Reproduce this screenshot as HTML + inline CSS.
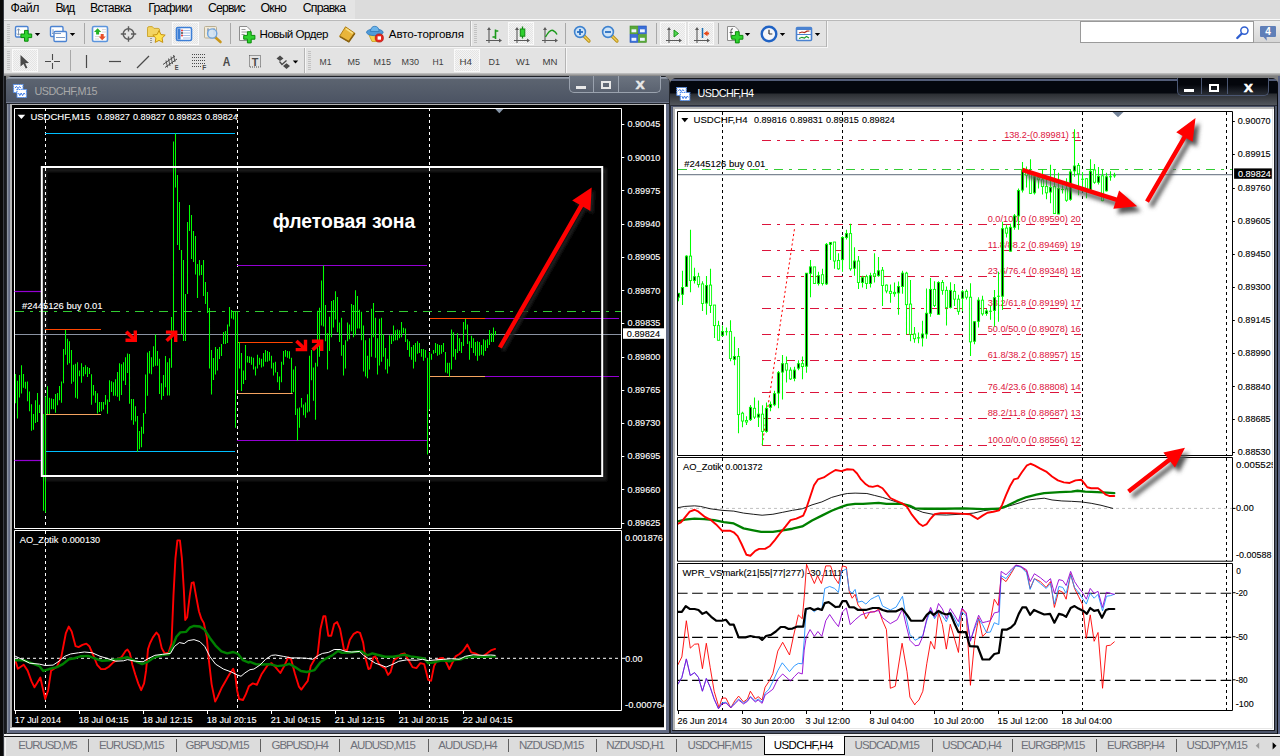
<!DOCTYPE html>
<html lang="ru"><head><meta charset="utf-8"><title>MetaTrader 4 - USDCHF,H4</title>
<style>
*{box-sizing:border-box}
html,body{margin:0;padding:0}
body{width:1280px;height:756px;overflow:hidden;position:relative;background:#808080;
font-family:"Liberation Sans",sans-serif;}
.a{position:absolute}
.t{position:absolute;white-space:pre;}
svg{position:absolute;left:0;top:0;overflow:visible}
svg text{font-family:"Liberation Sans",sans-serif;white-space:pre}
.press{position:absolute;background:#f4f4f4;border:1px solid #fafafa;
background-image:linear-gradient(45deg,#e4e4e4 25%,transparent 25%,transparent 75%,#e4e4e4 75%),
linear-gradient(45deg,#e4e4e4 25%,transparent 25%,transparent 75%,#e4e4e4 75%);
background-size:2px 2px;background-position:0 0,1px 1px;}
.sep{position:absolute;width:1px;background:#a8a8a8}
.grip{position:absolute;width:3px;background:repeating-linear-gradient(180deg,#c2c2c2 0 1px,transparent 1px 2px)}
</style></head>
<body>
<div class="a" style="left:0;top:0;width:4.5px;height:756px;background:#0a0a0a"></div>
<div class="a" style="left:3.3px;top:0;width:1px;height:756px;background:#3a3d44"></div>
<div class="a" style="left:4.4px;top:75px;width:1.400px;height:659px;background:#16181c"></div>
<div class="a" style="left:4.4px;top:0;width:1276px;height:18.600px;background:#dcdcdc"></div>
<div class="a" style="left:4.4px;top:0;width:351px;height:18.600px;background:#e4e4e4"></div>
<div class="a" style="left:4.4px;top:18.500px;width:1276px;height:1.300px;background:#fbfbfb"></div>
<div class="a" style="left:4.4px;top:19.800px;width:1276px;height:53px;background:#e3e3e3"></div>
<div class="a" style="left:4.4px;top:20.300px;width:1276px;height:1px;background:#b9b9b9"></div>
<div class="a" style="left:4.4px;top:72.600px;width:1276px;height:3px;background:linear-gradient(#c8c8c8,#808080)"></div>
<div class="a" style="left:4.4px;top:46px;width:823px;height:1px;background:#c4c4c4"></div>
<div class="a" style="left:4.4px;top:47px;width:823px;height:1px;background:#f6f6f6"></div>
<div class="a" style="left:826px;top:21px;width:1px;height:26px;background:#b4b4b4"></div>
<div class="a" style="left:827px;top:21px;width:1px;height:27px;background:#f6f6f6"></div>
<div class="a" style="left:470px;top:21px;width:1px;height:25px;background:#b4b4b4"></div>
<div class="a" style="left:471px;top:21px;width:1px;height:25px;background:#f6f6f6"></div>
<div class="a" style="left:304px;top:48px;width:1px;height:25px;background:#b4b4b4"></div>
<div class="a" style="left:305px;top:48px;width:1px;height:25px;background:#f6f6f6"></div>
<div class="a" style="left:565px;top:48px;width:1px;height:25px;background:#b4b4b4"></div>
<div class="a" style="left:566px;top:48px;width:1px;height:25px;background:#f6f6f6"></div>
<div class="grip" style="left:6.5px;top:24px;height:20px"></div>
<div class="grip" style="left:474px;top:24px;height:20px"></div>
<div class="grip" style="left:6.5px;top:51px;height:20px"></div>
<div class="grip" style="left:308px;top:51px;height:20px"></div>
<div class="press" style="left:172px;top:22px;width:26.5px;height:22.5px"></div>
<div class="press" style="left:508px;top:22px;width:25.5px;height:22.5px"></div>
<div class="press" style="left:660px;top:22px;width:25.5px;height:22.5px"></div>
<div class="press" style="left:688px;top:22px;width:25.5px;height:22.5px"></div>
<div class="press" style="left:12px;top:49px;width:25.5px;height:22.5px"></div>
<div class="press" style="left:454px;top:49px;width:25.5px;height:22.5px"></div>
<div class="sep" style="left:83.5px;top:23px;height:21px"></div>
<div class="sep" style="left:229.5px;top:23px;height:21px"></div>
<div class="sep" style="left:565px;top:23px;height:21px"></div>
<div class="sep" style="left:655.5px;top:23px;height:21px"></div>
<div class="sep" style="left:717.5px;top:23px;height:21px"></div>
<div class="sep" style="left:69.500px;top:50px;height:21px"></div>
<div class="a" style="left:1080px;top:21.300px;width:173.500px;height:22px;background:#fff;border:1px solid #9a9a9a"></div>
<div class="a" style="left:1254px;top:21.300px;width:26px;height:22px;background:linear-gradient(#ededed,#d6d6d6);border-bottom:1px solid #aaa"></div>
<span class="t" style="left:10.5px;top:0.2px;font-size:12.3px;line-height:17px;letter-spacing:-0.43px;color:#000;">Файл</span>
<span class="t" style="left:55.5px;top:0.2px;font-size:12.3px;line-height:17px;letter-spacing:-1.25px;color:#000;">Вид</span>
<span class="t" style="left:90px;top:0.2px;font-size:12.3px;line-height:17px;letter-spacing:-0.67px;color:#000;">Вставка</span>
<span class="t" style="left:148.3px;top:0.2px;font-size:12.3px;line-height:17px;letter-spacing:-0.8px;color:#000;">Графики</span>
<span class="t" style="left:208px;top:0.2px;font-size:12.3px;line-height:17px;letter-spacing:-0.89px;color:#000;">Сервис</span>
<span class="t" style="left:260.6px;top:0.2px;font-size:12.3px;line-height:17px;letter-spacing:-0.8px;color:#000;">Окно</span>
<span class="t" style="left:302.8px;top:0.2px;font-size:12.3px;line-height:17px;letter-spacing:-0.84px;color:#000;">Справка</span>
<span class="t" style="left:259.5px;top:26px;font-size:11.6px;line-height:16px;letter-spacing:-0.49px;color:#000;">Новый Ордер</span>
<span class="t" style="left:388.8px;top:26px;font-size:11.6px;line-height:16px;letter-spacing:-0.12px;color:#000;">Авто-торговля</span>
<svg width="1280" height="76" viewBox="0 0 1280 76">
<rect x="15.5" y="26.5" width="12.5" height="10.5" rx="1.2" fill="#fff" stroke="#4b83d2" stroke-width="1.4"/>
<path d="M18.5 29v6M17 30.5l1.5-1.8 1.5 1.8M17 33.5l1.5 1.8 1.5-1.8" stroke="#7a8ea8" stroke-width="0.9" fill="none"/>
<polygon points="24.5,30.4 28.1,30.4 28.1,34.0 31.700000000000003,34.0 31.700000000000003,37.599999999999994 28.1,37.599999999999994 28.1,41.199999999999996 24.5,41.199999999999996 24.5,37.599999999999994 20.9,37.599999999999994 20.9,34.0 24.5,34.0" fill="#2fd32f" stroke="#0a8a0a" stroke-width="1" stroke-linejoin="round"/>
<polygon points="34.8,33 40.2,33 37.5,36" fill="#000"/>
<rect x="50.5" y="26.5" width="12.5" height="10" rx="1.2" fill="#fff" stroke="#4b83d2" stroke-width="1.4"/>
<rect x="54" y="31.5" width="12.5" height="10" rx="1.2" fill="#fff" stroke="#4b83d2" stroke-width="1.4"/>
<path d="M53 29.2v4.6M52 33.5h9M56 37.5h9" stroke="#7a9ac8" stroke-width="1" fill="none"/>
<polygon points="69.8,33 75.2,33 72.5,36" fill="#000"/>
<rect x="92.5" y="26.5" width="15" height="15" rx="1.5" fill="#fdfdfd" stroke="#5b95dd" stroke-width="1.6"/>
<path d="M102 29.5h4M102 32h4M95 36.5h4M95 39h4" stroke="#d8d8d8" stroke-width="1"/>
<path d="M97.6 28.2l3.6 3.8h-2.1v2.6h-3v-2.6h-2.1z" fill="#25b225"/>
<path d="M102.2 40.2l-3.6-3.8h2.1v-2.4h3v2.4h2.1z" fill="#e8502a"/>
<circle cx="128.5" cy="34" r="5.3" fill="none" stroke="#5c5c5c" stroke-width="1.5"/>
<path d="M128.5 26.3v5.2M128.5 36.5v5.2M120.8 34h5.2M131 34h5.2" stroke="#5c5c5c" stroke-width="1.4"/>
<path d="M147.5 28.2q0-1.6 1.6-1.6h3.2l1.6 1.8h4.2q1.5 0 1.5 1.5v6.6h-12.1z" fill="#f3d462" stroke="#c9a227" stroke-width="0.9"/>
<path d="M151 38v5" stroke="#555" stroke-width="1" stroke-dasharray="1 1"/>
<path d="M159 30.6l1.9 3.9 4.3 0.6-3.1 3 0.7 4.3-3.8-2-3.8 2 0.7-4.3-3.1-3 4.3-0.6z" fill="#ffe14d" stroke="#c69312" stroke-width="1"/>
<rect x="176.5" y="27.5" width="15" height="13" rx="1.5" fill="#fdfdff" stroke="#3d7fd6" stroke-width="1.6"/>
<rect x="177.5" y="28.5" width="3" height="11" fill="#3d7fd6"/>
<path d="M183 30.5h7M183 33h7M183 35.5h7M183 38h7" stroke="#9db9e4" stroke-width="0.9"/>
<circle cx="182" cy="30.5" r="0.9" fill="#e02020"/><circle cx="182" cy="33" r="0.9" fill="#333"/><circle cx="182" cy="35.5" r="0.9" fill="#e02020"/>
<rect x="204.5" y="26.5" width="12" height="11.5" rx="1" fill="#f1ead8" stroke="#b9ae92" stroke-width="1"/>
<path d="M208 28v7M214 28v7M207 30h2M213 29.5h2" stroke="#7b8aa6" stroke-width="0.9"/>
<line x1="215.5" y1="37.5" x2="220.5" y2="42" stroke="#c9971c" stroke-width="2.6" stroke-linecap="round"/>
<circle cx="212.2" cy="33.5" r="4.6" fill="#cfe3f7" fill-opacity="0.85" stroke="#6ea3dd" stroke-width="1.4"/>
<path d="M239.5 26.5h7.5l3.5 3.5v10.5h-11z" fill="#fbfbfb" stroke="#8d8d8d" stroke-width="1"/>
<path d="M241.5 29.5h4M241.5 32h6M241.5 34.500h3" stroke="#9a9a9a" stroke-width="1"/>
<polygon points="247.4,31.699999999999996 251.20000000000002,31.699999999999996 251.20000000000002,35.4 254.9,35.4 254.9,39.199999999999996 251.20000000000002,39.199999999999996 251.20000000000002,42.9 247.4,42.9 247.4,39.199999999999996 243.70000000000002,39.199999999999996 243.70000000000002,35.4 247.4,35.4" fill="#2fd32f" stroke="#0a8a0a" stroke-width="1" stroke-linejoin="round"/>
<path d="M345.5 26.8l9.3 6.4-6 8.6-9.3-5.4z" fill="#e9b53a" stroke="#b07f14" stroke-width="1"/>
<path d="M340 36.6l8.8 5 6-8.4" fill="none" stroke="#8a6210" stroke-width="1.6"/>
<path d="M345.8 28.6l7 4.8" stroke="#f8e08a" stroke-width="1.4"/>
<path d="M369 35l3 6.500h7l3.5-6.500z" fill="#f3d04a" stroke="#c8a020" stroke-width="0.8"/>
<ellipse cx="374.8" cy="32.3" rx="8.3" ry="3.4" fill="#4f9ad8" stroke="#2f77b8" stroke-width="0.8"/>
<path d="M370.4 31.500q0.5-5.200 4.400-5.200t4.400 5.200z" fill="#6cb4ea" stroke="#2f77b8" stroke-width="0.8"/>
<circle cx="379.3" cy="38" r="4.1" fill="#e8261e" stroke="#b01410" stroke-width="0.7"/>
<rect x="377.600" y="36.300" width="3.400" height="3.400" fill="#fff"/>
<path d="M489 29V43M486 40.5H500" stroke="#5a5a5a" stroke-width="1.1" fill="none"/><path d="M489 27l-2 3h4zM502 40.5l-3 -2v4z" fill="#5a5a5a"/>
<path d="M495.5 29.5v9.500M495.500 31h2.800M492.500 37h3" stroke="#1a9a1a" stroke-width="1.6" fill="none"/>
<path d="M517 29V43M514 40.5H528" stroke="#5a5a5a" stroke-width="1.1" fill="none"/><path d="M517 27l-2 3h4zM530 40.5l-3 -2v4z" fill="#5a5a5a"/>
<path d="M522.500 26.500v12" stroke="#128a12" stroke-width="1.300"/>
<rect x="520.300" y="29" width="4.500" height="7.200" fill="#2fd02f" stroke="#128a12" stroke-width="1"/>
<path d="M545 29V43M542 40.5H556" stroke="#5a5a5a" stroke-width="1.1" fill="none"/><path d="M545 27l-2 3h4zM558 40.5l-3 -2v4z" fill="#5a5a5a"/>
<path d="M545.500 37q4.500-8 7.500-6.500t4 4" stroke="#1a9a1a" stroke-width="1.400" fill="none"/>
<line x1="584" y1="36" x2="589" y2="41" stroke="#b8901a" stroke-width="3.2" stroke-linecap="round"/><line x1="584" y1="36" x2="589" y2="41" stroke="#f2d15a" stroke-width="1.4" stroke-linecap="round"/><circle cx="580" cy="32" r="5.4" fill="#cfe4f8" stroke="#3f83cf" stroke-width="1.6"/><line x1="577" y1="32" x2="583" y2="32" stroke="#2a6fc0" stroke-width="1.8"/><line x1="580" y1="29" x2="580" y2="35" stroke="#2a6fc0" stroke-width="1.8"/>
<line x1="612" y1="36" x2="617" y2="41" stroke="#b8901a" stroke-width="3.2" stroke-linecap="round"/><line x1="612" y1="36" x2="617" y2="41" stroke="#f2d15a" stroke-width="1.4" stroke-linecap="round"/><circle cx="608" cy="32" r="5.4" fill="#cfe4f8" stroke="#3f83cf" stroke-width="1.6"/><line x1="605" y1="32" x2="611" y2="32" stroke="#2a6fc0" stroke-width="1.8"/>
<rect x="630" y="26" width="7.800" height="7.800" fill="#59a83a" stroke="#3d8a22" stroke-width="0.6"/>
<rect x="631.5" y="29.3" width="4.800" height="3" fill="#eef4ff"/>
<rect x="638.5" y="26" width="7.800" height="7.800" fill="#3a6fd8" stroke="#1f4fb8" stroke-width="0.6"/>
<rect x="640.0" y="29.3" width="4.800" height="3" fill="#eef4ff"/>
<rect x="630" y="34.5" width="7.800" height="7.800" fill="#3a6fd8" stroke="#1f4fb8" stroke-width="0.6"/>
<rect x="631.5" y="37.8" width="4.800" height="3" fill="#eef4ff"/>
<rect x="638.5" y="34.5" width="7.800" height="7.800" fill="#59a83a" stroke="#3d8a22" stroke-width="0.6"/>
<rect x="640.0" y="37.8" width="4.800" height="3" fill="#eef4ff"/>
<path d="M669 29V43M666 40.5H680" stroke="#5a5a5a" stroke-width="1.1" fill="none"/><path d="M669 27l-2 3h4zM682 40.5l-3 -2v4z" fill="#5a5a5a"/>
<path d="M674 30l4.500 3.500-4.500 3.500z" fill="#4fd84f" stroke="#128a12" stroke-width="0.9"/>
<path d="M697 29V43M694 40.5H708" stroke="#5a5a5a" stroke-width="1.1" fill="none"/><path d="M697 27l-2 3h4zM710 40.5l-3 -2v4z" fill="#5a5a5a"/>
<path d="M702.500 28v10" stroke="#1f6fb0" stroke-width="1.500"/>
<path d="M703.500 33.500l4-2.800v1.900h1.600v1.800h-1.600v1.900z" fill="#e84818"/>
<path d="M727.500 26.500h7.500l3.500 3.500v10.500h-11z" fill="#fbfbfb" stroke="#8d8d8d" stroke-width="1"/>
<path d="M733 28.800q-2-0.600-2 1.800v7M729.600 32.500h3.200" stroke="#555" stroke-width="1" fill="none"/>
<polygon points="735.4,31.699999999999996 739.1999999999999,31.699999999999996 739.1999999999999,35.4 742.9,35.4 742.9,39.199999999999996 739.1999999999999,39.199999999999996 739.1999999999999,42.9 735.4,42.9 735.4,39.199999999999996 731.6999999999999,39.199999999999996 731.6999999999999,35.4 735.4,35.4" fill="#2fd32f" stroke="#0a8a0a" stroke-width="1" stroke-linejoin="round"/>
<polygon points="744.8,33 750.2,33 747.5,36" fill="#000"/>
<circle cx="769" cy="34" r="7.300" fill="#f4f6fa" stroke="#1f62c4" stroke-width="2.400"/>
<path d="M769 34v-4.300M769 34h3.300" stroke="#333" stroke-width="1.200"/>
<polygon points="779.8,33 785.2,33 782.5,36" fill="#000"/>
<rect x="796.500" y="27.500" width="15" height="13" rx="1" fill="#fdfdfd" stroke="#4a82d0" stroke-width="1.600"/>
<rect x="797" y="28" width="14" height="2" fill="#4a82d0"/>
<path d="M797 34.500h14" stroke="#4a82d0" stroke-width="1"/>
<path d="M799 33l3-1 2.500 0.600 2.500-1.400 2.500-0.200" stroke="#b02a1a" stroke-width="1.200" fill="none"/>
<path d="M799 38.500l3-1.200 2.500 0.700 2-1.600 2.500 1.600" stroke="#1c9a2c" stroke-width="1.200" fill="none"/>
<polygon points="814.8,33 820.2,33 817.5,36" fill="#000"/>
<line x1="1237.300" y1="38" x2="1241.800" y2="33.500" stroke="#2f5fd0" stroke-width="2.400" stroke-linecap="round"/>
<circle cx="1244.400" cy="30.600" r="3.600" fill="#fff" stroke="#2f5fd0" stroke-width="1.500"/>
<path d="M1261 26h14q1 0 1 1v9q0 1-1 1h-8.500l0.300 3.800-3.300-3.800h-2.500q-1 0-1-1v-9q0-1 1-1z" fill="#5f7fb8"/>
<path d="M20.500 55v11.500l3-2.600 2.200 4.600 1.700-0.800-2.200-4.500 3.800-0.200z" fill="#4a4a4a"/>
<path d="M52.500 54v6M52.500 63v6M45 61.500h6M54 61.500h6" stroke="#4a4a4a" stroke-width="1.100"/>
<path d="M86.500 55v13" stroke="#4a4a4a" stroke-width="1.200"/>
<path d="M109 61.500h12" stroke="#4a4a4a" stroke-width="1.200"/>
<path d="M137 68l12-12" stroke="#4a4a4a" stroke-width="1.200"/>
<path d="M163 64.500l12-8.500M165 67.500l12-8.500" stroke="#4a4a4a" stroke-width="1"/>
<path d="M166 60.500l1.500 7M168.500 58.500l1.500 7.500M171 56.500l1.500 7.500M173.500 55l1.500 7" stroke="#4a4a4a" stroke-width="0.900"/>
<path d="M192 54.500h13M192 57.500h13M192 60.500h13M192 63.500h13M192 66.500h9" stroke="#4a4a4a" stroke-width="1" stroke-dasharray="1 1"/>
<rect x="249.500" y="55.500" width="11" height="11.500" fill="none" stroke="#4a4a4a" stroke-width="1" stroke-dasharray="1 1"/>
<path d="M276.500 58.500l3.500-3 3.500 3-3.500 2.600zM283 66l3.500-2.800 3.500 2.800-3.500 3z" fill="#4a4a4a"/>
<path d="M279.500 61.500l2.500 3 4.500-4" stroke="#4a4a4a" stroke-width="1.300" fill="none"/>
<polygon points="292.8,60.5 298.2,60.5 295.5,63.5" fill="#000"/>
<text x="174.8" y="69.58" font-size="7.2" fill="#4a4a4a" text-anchor="start" textLength="3.8" lengthAdjust="spacingAndGlyphs" font-weight="bold">E</text>
<text x="202.3" y="70.42" font-size="7.6" fill="#4a4a4a" text-anchor="start" textLength="4" lengthAdjust="spacingAndGlyphs" font-weight="bold">F</text>
<text x="222.8" y="66.08" font-size="12.5" fill="#4a4a4a" text-anchor="start" textLength="7.6" lengthAdjust="spacingAndGlyphs" font-weight="bold">A</text>
<text x="251.8" y="65.52" font-size="11.5" fill="#4a4a4a" text-anchor="start" textLength="6.6" lengthAdjust="spacingAndGlyphs" font-weight="bold">T</text>
<text x="319.5" y="65.02" font-size="9.7" fill="#404040" text-anchor="start" textLength="12" lengthAdjust="spacingAndGlyphs" stroke="none">M1</text>
<text x="347.5" y="65.02" font-size="9.7" fill="#404040" text-anchor="start" textLength="12.5" lengthAdjust="spacingAndGlyphs" stroke="none">M5</text>
<text x="373.5" y="65.02" font-size="9.7" fill="#404040" text-anchor="start" textLength="17.5" lengthAdjust="spacingAndGlyphs" stroke="none">M15</text>
<text x="401.5" y="65.02" font-size="9.7" fill="#404040" text-anchor="start" textLength="17.5" lengthAdjust="spacingAndGlyphs" stroke="none">M30</text>
<text x="432.5" y="65.02" font-size="9.7" fill="#404040" text-anchor="start" textLength="11" lengthAdjust="spacingAndGlyphs" stroke="none">H1</text>
<text x="459.5" y="65.02" font-size="9.7" fill="#404040" text-anchor="start" textLength="12.5" lengthAdjust="spacingAndGlyphs" stroke="none">H4</text>
<text x="488.5" y="65.02" font-size="9.7" fill="#404040" text-anchor="start" textLength="11.5" lengthAdjust="spacingAndGlyphs" stroke="none">D1</text>
<text x="516" y="65.02" font-size="9.7" fill="#404040" text-anchor="start" textLength="14" lengthAdjust="spacingAndGlyphs" stroke="none">W1</text>
<text x="542.5" y="65.02" font-size="9.7" fill="#404040" text-anchor="start" textLength="15" lengthAdjust="spacingAndGlyphs" stroke="none">MN</text>
<text x="1265.3" y="35.16" font-size="10.5" fill="#fff" text-anchor="start" textLength="5.6" lengthAdjust="spacingAndGlyphs" font-weight="bold">4</text>
</svg>
<div class="a" style="left:5.5px;top:75.5px;width:664px;height:658.3px;background:#626a82;border-radius:7px 7px 0 0;border:1px solid #23262c;box-shadow:inset 1.300px 0 0 #8a92a0"></div>
<div class="a" style="left:6px;top:75.5px;width:663px;height:28.200px;background:linear-gradient(#1c2028 0,#1c2028 0.800px,#9aa2b0 1.300px,#9aa2b0 2.300px,#5c6470 2.900px,#4c5464 25.800px,#70788c 26.200px,#70788c 27.100px,#20242c 27.500px);border-radius:6px 6px 0 0"></div>
<div class="a" style="left:568.5px;top:76px;width:92.500px;height:17.2px;border:1px solid #9aa2ae;border-top:none;border-radius:0 0 5px 5px;background:linear-gradient(#6c7480,#5a6270)"></div>
<div class="a" style="left:593.2px;top:76px;width:1px;height:16px;background:#9aa2ae"></div>
<div class="a" style="left:618.3px;top:76px;width:1px;height:16px;background:#9aa2ae"></div>
<div class="a" style="left:575.8px;top:85.6px;width:10px;height:3px;background:#e8e8e8"></div>
<div class="a" style="left:600.8px;top:80.9px;width:10px;height:8px;border:2px solid #e8e8e8;border-top-width:2.500px"></div>
<svg width="1280" height="756" viewBox="0 0 1280 756"><text x="635.7" y="88.65" font-size="10.2" fill="#e8e8e8" text-anchor="start" textLength="8.8" lengthAdjust="spacingAndGlyphs" font-weight="bold" stroke="#e8e8e8" stroke-width="0.550">X</text></svg>
<span class="t" style="left:34.5px;top:83.5px;font-size:10.8px;line-height:15px;letter-spacing:-0.53px;color:#a9a9a9;">USDCHF,M15</span>
<div class="a" style="left:10.200px;top:103.500px;width:656px;height:626px;background:#fff"></div>
<div class="a" style="left:10.200px;top:103.500px;width:653.800px;height:624px;background:#b4b4b4"></div>
<div class="a" style="left:11.600px;top:105.300px;width:652.400px;height:622.200px;background:#000"></div>
<svg width="1280" height="756" viewBox="0 0 1280 756">
<defs><filter id="bl1" x="-20%" y="-20%" width="140%" height="140%"><feGaussianBlur stdDeviation="1.6"/></filter><filter id="bl2" x="-20%" y="-20%" width="140%" height="140%"><feGaussianBlur stdDeviation="2"/></filter></defs>
<g transform="translate(13,84)"><rect x="0.500" y="0.500" width="9.500" height="8" fill="#fff" stroke="#4f8df0" stroke-width="1.200" stroke-dasharray="1.200 0.600"/><path d="M2 4l1.500-1.600 1.500 2.200 1.500-2 1.500 1.600" stroke="#3d7be8" stroke-width="1" fill="none"/><rect x="4" y="5.500" width="9.500" height="8" fill="#fff" stroke="#4f8df0" stroke-width="1.200" stroke-dasharray="1.200 0.600"/><path d="M5.500 9l1.300 2.600 1.400-2.600 1.400 2.600 1.400-2.600 1 1.400" stroke="#3d7be8" stroke-width="1" fill="none"/></g>
<path d="M14.500 108.500H621.500V528.500H14.500zM14.500 530.500H621.500V710.500H14.500z" fill="none" stroke="#ffffff" stroke-width="1"/>
<rect x="44.800" y="170" width="560.400" height="309" fill="none" stroke="#202020" stroke-width="3" filter="url(#bl1)"/>
<line x1="45.5" y1="109" x2="45.5" y2="528" stroke="#ffffff" stroke-width="1" stroke-dasharray="3 3" stroke-dashoffset="1"/>
<line x1="45.5" y1="531" x2="45.5" y2="710" stroke="#ffffff" stroke-width="1" stroke-dasharray="3 3"/>
<line x1="237.5" y1="109" x2="237.5" y2="528" stroke="#ffffff" stroke-width="1" stroke-dasharray="3 3" stroke-dashoffset="1"/>
<line x1="237.5" y1="531" x2="237.5" y2="710" stroke="#ffffff" stroke-width="1" stroke-dasharray="3 3"/>
<line x1="429.5" y1="109" x2="429.5" y2="528" stroke="#ffffff" stroke-width="1" stroke-dasharray="3 3" stroke-dashoffset="1"/>
<line x1="429.5" y1="531" x2="429.5" y2="710" stroke="#ffffff" stroke-width="1" stroke-dasharray="3 3"/>
<line x1="45" y1="133.5" x2="235" y2="133.5" stroke="#00bfff" stroke-width="1.2"/>
<line x1="45" y1="451.5" x2="235" y2="451.5" stroke="#00bfff" stroke-width="1.2"/>
<line x1="14.5" y1="291.5" x2="41" y2="291.5" stroke="#9400d3" stroke-width="1.2"/>
<line x1="14.5" y1="460.5" x2="41" y2="460.5" stroke="#9400d3" stroke-width="1.2"/>
<line x1="237" y1="265.5" x2="427" y2="265.5" stroke="#9400d3" stroke-width="1.2"/>
<line x1="237" y1="440.5" x2="427" y2="440.5" stroke="#9400d3" stroke-width="1.2"/>
<line x1="45" y1="329.5" x2="101" y2="329.5" stroke="#ff4500" stroke-width="1.2"/>
<line x1="45" y1="414.5" x2="101" y2="414.5" stroke="#f4a460" stroke-width="1.2"/>
<line x1="237" y1="342.5" x2="292.7" y2="342.5" stroke="#ff4500" stroke-width="1.2"/>
<line x1="237" y1="393.5" x2="292.7" y2="393.5" stroke="#f4a460" stroke-width="1.2"/>
<line x1="429.9" y1="318.5" x2="485" y2="318.5" stroke="#ff4500" stroke-width="1.2"/>
<line x1="485" y1="318.5" x2="619" y2="318.5" stroke="#9400d3" stroke-width="1.2"/>
<line x1="429.9" y1="376.5" x2="485" y2="376.5" stroke="#f4a460" stroke-width="1.2"/>
<line x1="485" y1="376.5" x2="619" y2="376.5" stroke="#9400d3" stroke-width="1.2"/>
<line x1="15" y1="311.5" x2="621" y2="311.5" stroke="#32cd32" stroke-width="1.1" stroke-dasharray="9 6 3 6"/>
<line x1="15" y1="334.5" x2="621" y2="334.5" stroke="#8a92a2" stroke-width="1.1"/>
<path d="M15.5 373.94V403.31M17.5 380.79V418.58M19.5 374.92V397.44M21.5 365.13V393.52M23.5 373.94V387.65M25.5 381.77V388.63M27.5 381.38V401.35M29.5 391.56V411.14M31.5 404.29V430.72M33.5 414.08V429.74M35.5 400.37V422.89M37.5 392.93V421.91M39.5 404.87V413.1M41.5 409.18V417.01M43.5 414V510.8M45.5 396.6V512.7M47.5 386.28V414.08M49.5 397.83V414.08M51.5 398.41V409.18M53.5 399V409.18M55.5 393.91V412.71M57.5 392.93V405.27M59.5 386.08V400.37M61.5 381.38V402.72M63.5 349.08V383.34M65.5 329.89V354.76M67.5 338.7V364.74M69.5 341.25V363.18M71.5 350.06V383.73M73.5 364.74V381.77M75.5 363.76V397.83M77.5 362.2V398.81M79.5 370.42V376.29M81.5 363.18V382.75M83.5 367.09V376.29M85.5 365.13V374.33M87.5 367.09V376.88M89.5 368.07V373.94M91.5 374.33V404.87M93.5 385.1V395.48M95.5 390.97V402.72M97.5 393.13V413.49M99.5 401.94V412.12M101.5 401.94V411.14M103.5 401.94V409.57M105.5 395.09V404.87M107.5 399.39V413.68M109.5 380.21V401.94M111.5 381.19V391.95M113.5 382.36V395.87M115.5 379.23V395.87M117.5 371.99V396.85M119.5 363.18V400.76M121.5 364.15V394.89M123.5 362.2V380.79M125.5 357.3V385.1M127.5 353.39V372.96M129.5 353.97V403.7M131.5 399V420.34M133.5 399V424.84M135.5 406.25V421.52M137.5 416.03V451.66M139.5 431.11V449.31M141.5 426.8V447.36M143.5 413.1V433.65M145.5 374.53V413.68M147.5 352.41V395.87M149.5 351.04V373.55M151.5 357.3V374.33M153.5 346.14V366.7M155.5 334.4V365.72M157.5 351.04V365.72M159.5 358.87V393.91M161.5 383.14V399.78M163.5 374.92V396.06M165.5 355.93V387.26M167.5 362.2V395.48M169.5 358.28V395.48M171.5 317V367.7M173.5 141.6V334M175.5 133.4V187.6M177.5 175V245M179.5 202V250M181.5 250V334M183.5 260V341M185.5 294V341M187.5 222V294M189.5 205V231M191.5 215V259M193.5 231V262M195.5 236V274.6M197.5 264V298M199.5 260V275.5M201.5 265V275M203.5 260V296M205.5 282V304M207.5 292V313M209.5 308V368.5M211.5 350V394.5M213.5 358V380M215.5 347V374.5M217.5 349V370.5M219.5 347V359M221.5 344V356M223.5 332V344M225.5 331V344M227.5 324.5V343M229.5 307V326.5M231.5 310V318.5M233.5 311.5V319.5M235.5 312V427.8M237.5 312V390M239.5 342V368.5M241.5 353V391M243.5 370.5V384M245.5 345V380M247.5 356V362.5M249.5 356.5V363M251.5 356.8V364.63M253.5 357.78V369.53M255.5 366.59V375.4M257.5 354.84V368.55M259.5 357.78V364.63M261.5 358.76V367.57M263.5 352.89V366.59M265.5 349.95V361.7M267.5 350.93V361.7M269.5 351.91V360.72M271.5 355.82V368.55M273.5 362.67V375.4M275.5 361.7V372.46M277.5 372.07V382.25M279.5 376.38V390.08M281.5 361.7V382.25M283.5 350.93V364.63M285.5 349.95V356.8M287.5 350.93V357.78M289.5 351.32V358.76M291.5 357.78V393.02M293.5 369.53V392.04M295.5 366.2V414.95M297.5 408.48V440.4M299.5 407.51V427.67M301.5 398.11V407.51M303.5 404.57V415.34M305.5 402.61V417.69M307.5 394.19V412.4M309.5 355.82V411.42M311.5 349.95V380.29M313.5 367.57V400.65M315.5 362.67V419.84M317.5 310.79V366.59M319.5 307.86V356.8M321.5 280.45V325.48M323.5 265.38V326.46M325.5 304.92V341.14M327.5 333.31V369.53M329.5 316.67V350.93M331.5 301.01V337.22M333.5 300.03V327.44M335.5 291.22V319.6M337.5 297.09V332.33M339.5 322.54V342.12M341.5 317.65V355.82M343.5 345.05V375.4M345.5 340.16V368.55M347.5 322.54V341.14M349.5 324.5V339.18M351.5 303.94V331.35M353.5 304.92V337.22M355.5 290.24V335.27M357.5 296.11V328.41M359.5 309.82V328.41M361.5 311.77V340.16M363.5 325.48V371.48M365.5 340.16V376.38M367.5 355.82V378.34M369.5 338.2V369.53M371.5 308.84V356.8M373.5 302.96V337.22M375.5 317.65V357.78M377.5 338.2V374.42M379.5 318.63V365.61M381.5 317.65V361.7M383.5 334.29V356.8M385.5 347.99V369.53M387.5 358.76V373.44M389.5 335.27V366.59M391.5 335.27V344.08M393.5 325.48V341.14M395.5 330.37V340.16M397.5 329.39V340.16M399.5 330.37V338.2M401.5 321.95V337.22M403.5 327.83V333.31M405.5 328.41V342.12M407.5 339.18V349.95M409.5 341.14V356.8M411.5 347.01V359.74M413.5 345.05V368.55M415.5 343.1V361.7M417.5 341.14V353.86M419.5 343.1V352.89M421.5 348.97V356.8M423.5 348.97V360.72M425.5 349.95V357.78M427.5 357.78V454.49M429.5 351.91V409.46M431.5 353.86V359.74M433.5 349.95V353.86M435.5 343.1V352.89M437.5 344.08V355.82M439.5 345.05V354.84M441.5 345.05V353.86M443.5 343.1V351.91M445.5 351.91V372.46M447.5 362.67V373.44M449.5 362.67V376.38M451.5 329.39V369.53M453.5 332.33V356.8M455.5 348.97V359.74M457.5 333.31V352.89M459.5 338.2V350.93M461.5 342.12V352.89M463.5 321.95V346.03M465.5 319.02V329.39M467.5 324.5V344.08M469.5 341.14V359.74M471.5 335.66V347.99M473.5 338.2V352.89M475.5 342.12V355.82M477.5 341.14V360.72M479.5 342.12V355.82M481.5 345.05V354.84M483.5 339.18V355.82M485.5 340.16V350.93M487.5 339.18V347.99M489.5 329.98V345.05M491.5 333.31V342.12M493.5 327.44V342.12M495.5 330.96V335.27" stroke="#00ff00" stroke-width="1.050" fill="none"/>
<rect x="41.800" y="167" width="560.400" height="309" fill="none" stroke="#fff" stroke-width="2"/>
<path d="M125.5 340.3H135.3V330.5" fill="none" stroke="#ff0000" stroke-width="3.400" stroke-linejoin="miter"/><path d="M126.2 331.7L134.8 339.8" fill="none" stroke="#ff0000" stroke-width="3.600"/>
<path d="M165.9 332.1H175.7V341.9" fill="none" stroke="#ff0000" stroke-width="3.400" stroke-linejoin="miter"/><path d="M166.6 340.7L175.2 332.6" fill="none" stroke="#ff0000" stroke-width="3.600"/>
<path d="M295.7 349.6H305.5V339.8" fill="none" stroke="#ff0000" stroke-width="3.400" stroke-linejoin="miter"/><path d="M296.4 341L305 349.1" fill="none" stroke="#ff0000" stroke-width="3.600"/>
<path d="M311.9 341.3H321.7V351.1" fill="none" stroke="#ff0000" stroke-width="3.400" stroke-linejoin="miter"/><path d="M312.6 349.9L321.2 341.8" fill="none" stroke="#ff0000" stroke-width="3.600"/>
<polygon points="501.81,348.59 583.16,206.81 590.36,210.94 591.7,187.5 572.14,200.49 579.34,204.62 497.99,346.41" fill="#1c1c1c" transform="translate(3,3)" filter="url(#bl1)"/><polygon points="501.81,348.59 583.16,206.81 590.36,210.94 591.7,187.5 572.14,200.49 579.34,204.62 497.99,346.41" fill="#ff0000"/>
<text x="272.8" y="227.52" font-size="19.9" fill="#ffffff" text-anchor="start" textLength="142.5" lengthAdjust="spacingAndGlyphs" font-weight="bold">флетовая зона</text>
<polygon points="17.600,114.700 25.200,114.700 21.400,118.900" fill="#ffffff"/>
<text x="30.4" y="120.14" font-size="9.9" fill="#ffffff" text-anchor="start" textLength="59.8" lengthAdjust="spacingAndGlyphs" stroke="#ffffff" stroke-width="0.12">USDCHF,M15</text>
<text x="97" y="120.14" font-size="9.9" fill="#ffffff" text-anchor="start" textLength="32.8" lengthAdjust="spacingAndGlyphs" stroke="#ffffff" stroke-width="0.12">0.89827</text>
<text x="133" y="120.14" font-size="9.9" fill="#ffffff" text-anchor="start" textLength="32.8" lengthAdjust="spacingAndGlyphs" stroke="#ffffff" stroke-width="0.12">0.89827</text>
<text x="169" y="120.14" font-size="9.9" fill="#ffffff" text-anchor="start" textLength="32.8" lengthAdjust="spacingAndGlyphs" stroke="#ffffff" stroke-width="0.12">0.89823</text>
<text x="205" y="120.14" font-size="9.9" fill="#ffffff" text-anchor="start" textLength="32.8" lengthAdjust="spacingAndGlyphs" stroke="#ffffff" stroke-width="0.12">0.89824</text>
<text x="22" y="309.29" font-size="9.9" fill="#ffffff" text-anchor="start" textLength="80.5" lengthAdjust="spacingAndGlyphs" stroke="#ffffff" stroke-width="0.12">#2445126 buy 0.01</text>
<text x="19.7" y="543.24" font-size="9.9" fill="#ffffff" text-anchor="start" textLength="38.7" lengthAdjust="spacingAndGlyphs" stroke="#ffffff" stroke-width="0.12">AO_Zotik</text>
<text x="62.1" y="543.24" font-size="9.9" fill="#ffffff" text-anchor="start" textLength="38" lengthAdjust="spacingAndGlyphs" stroke="#ffffff" stroke-width="0.12">0.000130</text>
<line x1="621.5" y1="124.5" x2="624.3" y2="124.5" stroke="#ffffff" stroke-width="1"/>
<text x="627.5" y="127.19" font-size="9.9" fill="#ffffff" text-anchor="start" textLength="32.8" lengthAdjust="spacingAndGlyphs" stroke="#ffffff" stroke-width="0.12">0.90045</text>
<line x1="621.5" y1="157.5" x2="624.3" y2="157.5" stroke="#ffffff" stroke-width="1"/>
<text x="627.5" y="160.54" font-size="9.9" fill="#ffffff" text-anchor="start" textLength="32.8" lengthAdjust="spacingAndGlyphs" stroke="#ffffff" stroke-width="0.12">0.90010</text>
<line x1="621.5" y1="190.5" x2="624.3" y2="190.5" stroke="#ffffff" stroke-width="1"/>
<text x="627.5" y="193.69" font-size="9.9" fill="#ffffff" text-anchor="start" textLength="32.8" lengthAdjust="spacingAndGlyphs" stroke="#ffffff" stroke-width="0.12">0.89975</text>
<line x1="621.5" y1="224.5" x2="624.3" y2="224.5" stroke="#ffffff" stroke-width="1"/>
<text x="627.5" y="226.99" font-size="9.9" fill="#ffffff" text-anchor="start" textLength="32.8" lengthAdjust="spacingAndGlyphs" stroke="#ffffff" stroke-width="0.12">0.89940</text>
<line x1="621.5" y1="257.5" x2="624.3" y2="257.5" stroke="#ffffff" stroke-width="1"/>
<text x="627.5" y="260.34" font-size="9.9" fill="#ffffff" text-anchor="start" textLength="32.8" lengthAdjust="spacingAndGlyphs" stroke="#ffffff" stroke-width="0.12">0.89905</text>
<line x1="621.5" y1="290.5" x2="624.3" y2="290.5" stroke="#ffffff" stroke-width="1"/>
<text x="627.5" y="293.59" font-size="9.9" fill="#ffffff" text-anchor="start" textLength="32.8" lengthAdjust="spacingAndGlyphs" stroke="#ffffff" stroke-width="0.12">0.89870</text>
<line x1="621.5" y1="323.5" x2="624.3" y2="323.5" stroke="#ffffff" stroke-width="1"/>
<text x="627.5" y="326.14" font-size="9.9" fill="#ffffff" text-anchor="start" textLength="32.8" lengthAdjust="spacingAndGlyphs" stroke="#ffffff" stroke-width="0.12">0.89835</text>
<line x1="621.5" y1="357.5" x2="624.3" y2="357.5" stroke="#ffffff" stroke-width="1"/>
<text x="627.5" y="360.19" font-size="9.9" fill="#ffffff" text-anchor="start" textLength="32.8" lengthAdjust="spacingAndGlyphs" stroke="#ffffff" stroke-width="0.12">0.89800</text>
<line x1="621.5" y1="390.5" x2="624.3" y2="390.5" stroke="#ffffff" stroke-width="1"/>
<text x="627.5" y="393.34" font-size="9.9" fill="#ffffff" text-anchor="start" textLength="32.8" lengthAdjust="spacingAndGlyphs" stroke="#ffffff" stroke-width="0.12">0.89765</text>
<line x1="621.5" y1="423.5" x2="624.3" y2="423.5" stroke="#ffffff" stroke-width="1"/>
<text x="627.5" y="426.29" font-size="9.9" fill="#ffffff" text-anchor="start" textLength="32.8" lengthAdjust="spacingAndGlyphs" stroke="#ffffff" stroke-width="0.12">0.89730</text>
<line x1="621.5" y1="456.5" x2="624.3" y2="456.5" stroke="#ffffff" stroke-width="1"/>
<text x="627.5" y="459.49" font-size="9.9" fill="#ffffff" text-anchor="start" textLength="32.8" lengthAdjust="spacingAndGlyphs" stroke="#ffffff" stroke-width="0.12">0.89695</text>
<line x1="621.5" y1="489.5" x2="624.3" y2="489.5" stroke="#ffffff" stroke-width="1"/>
<text x="627.5" y="492.79" font-size="9.9" fill="#ffffff" text-anchor="start" textLength="32.8" lengthAdjust="spacingAndGlyphs" stroke="#ffffff" stroke-width="0.12">0.89660</text>
<line x1="621.5" y1="523.5" x2="624.3" y2="523.5" stroke="#ffffff" stroke-width="1"/>
<text x="627.5" y="526.34" font-size="9.9" fill="#ffffff" text-anchor="start" textLength="32.8" lengthAdjust="spacingAndGlyphs" stroke="#ffffff" stroke-width="0.12">0.89625</text>
<rect x="623" y="328.300" width="41" height="10.500" fill="#fff"/>
<text x="626.8" y="337.14" font-size="9.9" fill="#000" text-anchor="start" textLength="33.2" lengthAdjust="spacingAndGlyphs" stroke="#000" stroke-width="0.12">0.89824</text>
<text x="624.9" y="540.99" font-size="9.9" fill="#ffffff" text-anchor="start" textLength="38" lengthAdjust="spacingAndGlyphs" stroke="#ffffff" stroke-width="0.12">0.001876</text>
<line x1="621.5" y1="658.3" x2="625.5" y2="658.3" stroke="#ffffff" stroke-width="1"/>
<text x="625.2" y="661.69" font-size="9.9" fill="#ffffff" text-anchor="start" textLength="17.3" lengthAdjust="spacingAndGlyphs" stroke="#ffffff" stroke-width="0.12">0.00</text>
<clipPath id="clL"><rect x="11.600" y="105.300" width="652.400" height="622.200"/></clipPath>
<text x="625" y="707.69" font-size="9.9" fill="#ffffff" text-anchor="start" textLength="42.3" lengthAdjust="spacingAndGlyphs" clip-path="url(#clL)" stroke="#ffffff" stroke-width="0.12">-0.000764</text>
<line x1="15" y1="658.3" x2="621" y2="658.3" stroke="#ffffff" stroke-width="1" stroke-dasharray="3 3"/>
<clipPath id="cl1"><rect x="15" y="532" width="607" height="178"/></clipPath><g clip-path="url(#cl1)">
<polyline fill="none" stroke="#ff0000" stroke-width="1.9" stroke-linejoin="round" stroke-linecap="round" points="15.48,660.86 17.83,668.69 20.77,666.73 23.7,664.77 27.62,670.65 31.53,681.41 34.47,687.29 37.41,682.39 40.34,677.5 42.3,686.31 45.24,699.03 48.18,690.22 51.11,670.65 56.99,666.73 61.29,656.94 65.79,633.45 68.73,626.6 71.67,631.49 75.58,646.18 78.52,647.15 82.44,644.81 86.35,643.63 89.29,646.18 93.2,654.99 97.12,664.77 101.03,669.08 104.95,669.08 108.86,666.73 112.78,662.82 116.7,659.88 121.59,656.94 125.51,651.07 127.46,649.5 129.81,653.03 132.36,664.77 135.29,674.56 138.23,683.37 141.17,690.22 144.1,683.37 146.06,670.65 148.02,649.11 149.98,643.24 152.91,637.37 156.44,632.47 158.79,635.41 161.72,648.13 164.66,653.42 168.57,652.64 171.51,643.24 173.47,595.6 175.43,558.41 177.38,540.4 179.93,540.4 181.89,558.41 183.84,589.73 185.22,620.08 187.17,617.14 189.72,595.6 191.68,582.88 193.63,582.29 195.98,595.6 198.92,611.27 201.46,619.1 203.81,623.01 206.75,636.72 208.71,658.9 211.64,684.35 215.17,701.58 217.52,697.08 221.43,688.27 225.35,681.41 229.26,674.56 233.18,668.69 235.14,674.56 237.09,690.22 239.05,699.03 242.97,700.01 245.9,694.14 248.84,686.31 252.76,683.37 256.85,684.74 261.75,673.97 267.62,665.16 271.53,663.2 275.45,667.12 280.34,672.99 284.26,666.14 288.18,657.33 291.11,659.29 295.03,673.97 298.94,686.7 301.29,689.63 304.82,684.74 307.75,680.82 310.69,666.14 314.6,659.29 317.54,655.37 320.48,628.94 323.41,616.22 325.37,616.22 328.31,635.79 331.25,635.79 334.18,624.05 337.12,622.09 340.05,628.94 343.97,649.5 346.91,650.48 349.84,639.71 353.76,633.84 357.28,631.88 360.02,632.86 363.16,642.65 365.51,658.31 368.44,669.08 370.4,668.1 373.34,657.33 375.29,656.35 379.21,664.18 383.12,667.12 385.08,668.1 388.02,674.95 390.56,672.01 393.89,660.27 396.83,658.31 400.74,654.39 404.66,653.41 408.57,660.27 412.49,667.12 416.41,668.1 420.32,663.2 424.24,664.18 428.15,679.84 431.09,680.82 434.03,666.14 436.96,660.27 439.9,658.31 442.83,657.92 445.77,661.25 449.3,669.08 452.62,662.22 455.56,656.35 459.48,654 463.39,650.48 467.31,644.6 471.22,652.44 475.14,653.41 479.05,655.37 482.97,656.35 486.88,653.41 490.8,650.48 495.11,648.91"/>
<polyline fill="none" stroke="#008000" stroke-width="2.4" stroke-linejoin="round" stroke-linecap="round" points="15.48,660.21 23.7,660.21 31.53,663.15 39.37,666.08 43.28,670.98 49.15,669.02 56.99,667.06 62.86,664.12 68.73,659.23 74.6,658.25 80.48,656.29 88.31,655.9 94.18,658.25 102.01,660.8 109.84,660.21 117.67,659.23 127.46,657.27 135.29,661.19 142.15,664.12 147.04,662.17 152.91,658.25 160.74,655.31 168.57,654.34 172.49,646.51 176.41,636.72 180.32,632.41 186.19,631.82 190.11,627.32 194.03,625.95 199.9,626.54 204.79,629.86 209.69,637.7 215.56,645.53 221.43,651.4 227.31,653.36 233.18,651.99 238.07,653.94 242.97,660.21 248.84,662.56 250,661.83 255.87,664.18 261.75,664.57 269.58,664.18 277.41,666.14 285.24,665.16 289.15,663.79 295.03,667.12 300.9,671.03 306.77,672.01 314.6,670.05 320.48,662.22 326.35,658.31 332.22,655.37 338.1,650.87 342.01,652.83 349.84,652.44 357.67,651.46 361.59,651.46 367.46,655.37 372.36,653.41 377.25,654.78 385.08,656.74 392.91,656.74 400.74,655.37 404.66,654.78 410.53,656.35 418.36,657.33 424.24,658.31 428.15,663.2 434.03,662.22 441.86,660.27 449.69,661.25 455.56,659.87 461.43,659.29 465.35,657.33 473.18,656.74 484.93,656.74 495.11,656.35"/>
<polyline fill="none" stroke="#ffffff" stroke-width="1" stroke-linejoin="round" stroke-linecap="round" points="15.48,656.29 21.75,659.23 29.58,663.15 39.37,664.12 45.24,665.49 53.07,665.1 58.94,661.19 64.82,656.29 70.69,653.94 78.52,652.77 84.39,651.99 92.22,652.77 100.05,656.29 107.89,658.64 115.72,661.19 123.55,660.8 127.46,659.62 135.29,661.19 143.12,661.78 147.04,659.23 154.87,655.31 162.7,654.34 170.53,653.36 174.45,646.51 179.34,642.59 184.24,643.57 188.15,640.63 194.03,639.65 199.9,641.61 204.79,646.51 209.69,656.29 215.56,664.12 223.39,669.02 231.22,671.96 237.09,674.89 241.01,676.26 244.93,672.93 248.84,670.39 250,669.66 253.92,669.08 259.79,665.16 265.66,659.29 271.53,655.37 275.45,654.98 283.28,656.35 291.11,657.92 298.94,657.92 306.77,658.31 312.65,659.29 318.52,655.37 322.44,653.41 328.31,652.44 334.18,649.5 340.05,649.5 345.93,651.46 351.8,652.04 359.63,651.46 363.55,655.37 369.42,659.29 375.29,663.2 381.17,665.16 386.06,667.12 392.91,664.18 398.79,661.25 406.62,659.87 416.41,660.27 422.28,659.29 428.15,660.66 435.98,659.87 443.81,659.29 451.64,658.7 459.48,659.29 465.35,656.35 473.18,654.78 482.97,655.37 490.8,654.98 495.11,655.37"/>
</g>
<line x1="15.5" y1="710.5" x2="15.5" y2="714" stroke="#ffffff" stroke-width="1"/>
<text x="14.7" y="722.99" font-size="9.9" fill="#ffffff" text-anchor="start" textLength="46.3" lengthAdjust="spacingAndGlyphs" stroke="#ffffff" stroke-width="0.12">17 Jul 2014</text>
<line x1="79.5" y1="710.5" x2="79.5" y2="714" stroke="#ffffff" stroke-width="1"/>
<text x="78.7" y="722.99" font-size="9.9" fill="#ffffff" text-anchor="start" textLength="49.9" lengthAdjust="spacingAndGlyphs" stroke="#ffffff" stroke-width="0.12">18 Jul 04:15</text>
<line x1="143.5" y1="710.5" x2="143.5" y2="714" stroke="#ffffff" stroke-width="1"/>
<text x="142.7" y="722.99" font-size="9.9" fill="#ffffff" text-anchor="start" textLength="49.9" lengthAdjust="spacingAndGlyphs" stroke="#ffffff" stroke-width="0.12">18 Jul 12:15</text>
<line x1="207.5" y1="710.5" x2="207.5" y2="714" stroke="#ffffff" stroke-width="1"/>
<text x="206.7" y="722.99" font-size="9.9" fill="#ffffff" text-anchor="start" textLength="49.9" lengthAdjust="spacingAndGlyphs" stroke="#ffffff" stroke-width="0.12">18 Jul 20:15</text>
<line x1="271.5" y1="710.5" x2="271.5" y2="714" stroke="#ffffff" stroke-width="1"/>
<text x="270.7" y="722.99" font-size="9.9" fill="#ffffff" text-anchor="start" textLength="49.9" lengthAdjust="spacingAndGlyphs" stroke="#ffffff" stroke-width="0.12">21 Jul 04:15</text>
<line x1="335.5" y1="710.5" x2="335.5" y2="714" stroke="#ffffff" stroke-width="1"/>
<text x="334.7" y="722.99" font-size="9.9" fill="#ffffff" text-anchor="start" textLength="49.9" lengthAdjust="spacingAndGlyphs" stroke="#ffffff" stroke-width="0.12">21 Jul 12:15</text>
<line x1="399.5" y1="710.5" x2="399.5" y2="714" stroke="#ffffff" stroke-width="1"/>
<text x="398.7" y="722.99" font-size="9.9" fill="#ffffff" text-anchor="start" textLength="49.9" lengthAdjust="spacingAndGlyphs" stroke="#ffffff" stroke-width="0.12">21 Jul 20:15</text>
<line x1="463.5" y1="710.5" x2="463.5" y2="714" stroke="#ffffff" stroke-width="1"/>
<text x="462.7" y="722.99" font-size="9.9" fill="#ffffff" text-anchor="start" textLength="49.9" lengthAdjust="spacingAndGlyphs" stroke="#ffffff" stroke-width="0.12">22 Jul 04:15</text>
<polygon points="495.300,109 503.300,109 499.300,113.300" fill="#8796a8"/>
</svg>
<div class="a" style="left:669.8px;top:77.9px;width:608.3px;height:655.9px;background:#4e566b;border-radius:7px 7px 0 0;border:1px solid #23262c;box-shadow:inset 1.300px 0 0 #5a6480"></div>
<div class="a" style="left:670.3px;top:77.9px;width:607.3px;height:28.200px;background:linear-gradient(#16181e 0,#16181e 1px,#525c78 1.400px,#525c78 2.500px,#04070e 3.200px,#04070e 15px,#2c2f34 16px,#50545a 26.600px,#4a5068 27px,#15171c 27.800px);border-radius:6px 6px 0 0"></div>
<div class="a" style="left:1176.7px;top:78.4px;width:92.500px;height:17.8px;border:1px solid #4a5672;border-top:none;border-radius:0 0 5px 5px;background:linear-gradient(#04060c 40%,#2a2e36)"></div>
<div class="a" style="left:1201.4px;top:78.4px;width:1px;height:16px;background:#4a5672"></div>
<div class="a" style="left:1226.5px;top:78.4px;width:1px;height:16px;background:#4a5672"></div>
<div class="a" style="left:1184px;top:88.5px;width:10px;height:3px;background:#ffffff"></div>
<div class="a" style="left:1209px;top:83.8px;width:10px;height:8px;border:2px solid #ffffff;border-top-width:2.500px"></div>
<svg width="1280" height="756" viewBox="0 0 1280 756"><text x="1243.9" y="91.55" font-size="10.2" fill="#ffffff" text-anchor="start" textLength="8.8" lengthAdjust="spacingAndGlyphs" font-weight="bold" stroke="#ffffff" stroke-width="0.550">X</text></svg>
<span class="t" style="left:697.5px;top:86.4px;font-size:10.8px;line-height:15px;letter-spacing:-0.51px;color:#ffffff;">USDCHF,H4</span>
<div class="a" style="left:672.800px;top:106.600px;width:601.500px;height:623.300px;background:#b4b4b4"></div>
<div class="a" style="left:674.500px;top:108.600px;width:599.800px;height:621.300px;background:#fff"></div>
<div class="a" style="left:1272.100px;top:108.600px;width:1.100px;height:620.300px;background:#e6e6e6"></div>
<div class="a" style="left:674.500px;top:727.900px;width:598.700px;height:1px;background:#e6e6e6"></div>
<div class="a" style="left:1274.300px;top:106px;width:0.800px;height:624.500px;background:#1a1c22"></div>
<div class="a" style="left:1275.100px;top:106px;width:2.200px;height:627px;background:#50586a"></div>
<div class="a" style="left:1277.200px;top:84px;width:0.900px;height:650px;background:#08090c"></div>
<div class="a" style="left:1278.100px;top:76px;width:2px;height:658px;background:#5a6484"></div>
<div class="a" style="left:672px;top:729.900px;width:603px;height:0.800px;background:#1a1c22"></div>
<svg width="1280" height="756" viewBox="0 0 1280 756">
<g transform="translate(676.3,87)"><rect x="0.500" y="0.500" width="9.500" height="8" fill="#fff" stroke="#4f8df0" stroke-width="1.200" stroke-dasharray="1.200 0.600"/><path d="M2 4l1.500-1.600 1.500 2.200 1.500-2 1.500 1.600" stroke="#3d7be8" stroke-width="1" fill="none"/><rect x="4" y="5.500" width="9.500" height="8" fill="#fff" stroke="#4f8df0" stroke-width="1.200" stroke-dasharray="1.200 0.600"/><path d="M5.500 9l1.300 2.600 1.400-2.600 1.400 2.600 1.400-2.600 1 1.400" stroke="#3d7be8" stroke-width="1" fill="none"/></g>
<path d="M677.5 111.500H1232.5V455.500H677.5z M677.5 457.500H1232.5V561.200H677.5z M677.5 563.500H1232.5V710.500H677.5z" fill="none" stroke="#000000" stroke-width="1"/>
<line x1="722.5" y1="112" x2="722.5" y2="455" stroke="#000000" stroke-width="1" stroke-dasharray="3 3"/>
<line x1="722.5" y1="458" x2="722.5" y2="561" stroke="#000000" stroke-width="1" stroke-dasharray="3 3"/>
<line x1="722.5" y1="564" x2="722.5" y2="710" stroke="#000000" stroke-width="1" stroke-dasharray="3 3"/>
<line x1="842.5" y1="112" x2="842.5" y2="455" stroke="#000000" stroke-width="1" stroke-dasharray="3 3"/>
<line x1="842.5" y1="458" x2="842.5" y2="561" stroke="#000000" stroke-width="1" stroke-dasharray="3 3"/>
<line x1="842.5" y1="564" x2="842.5" y2="710" stroke="#000000" stroke-width="1" stroke-dasharray="3 3"/>
<line x1="962.5" y1="112" x2="962.5" y2="455" stroke="#000000" stroke-width="1" stroke-dasharray="3 3"/>
<line x1="962.5" y1="458" x2="962.5" y2="561" stroke="#000000" stroke-width="1" stroke-dasharray="3 3"/>
<line x1="962.5" y1="564" x2="962.5" y2="710" stroke="#000000" stroke-width="1" stroke-dasharray="3 3"/>
<line x1="1082.5" y1="112" x2="1082.5" y2="455" stroke="#000000" stroke-width="1" stroke-dasharray="3 3"/>
<line x1="1082.5" y1="458" x2="1082.5" y2="561" stroke="#000000" stroke-width="1" stroke-dasharray="3 3"/>
<line x1="1082.5" y1="564" x2="1082.5" y2="710" stroke="#000000" stroke-width="1" stroke-dasharray="3 3"/>
<line x1="1226.5" y1="112" x2="1226.5" y2="455" stroke="#000000" stroke-width="1" stroke-dasharray="3 3"/>
<line x1="1226.5" y1="458" x2="1226.5" y2="561" stroke="#000000" stroke-width="1" stroke-dasharray="3 3"/>
<line x1="1226.5" y1="564" x2="1226.5" y2="710" stroke="#000000" stroke-width="1" stroke-dasharray="3 3"/>
<line x1="762" y1="140.5" x2="1081" y2="140.5" stroke="#dc143c" stroke-width="1.05" stroke-dasharray="9 6 3 6"/>
<line x1="762" y1="224.5" x2="1081" y2="224.5" stroke="#dc143c" stroke-width="1.05" stroke-dasharray="9 6 3 6"/>
<line x1="762" y1="250.5" x2="1081" y2="250.5" stroke="#dc143c" stroke-width="1.05" stroke-dasharray="9 6 3 6"/>
<line x1="762" y1="276.5" x2="1081" y2="276.5" stroke="#dc143c" stroke-width="1.05" stroke-dasharray="9 6 3 6"/>
<line x1="762" y1="308.5" x2="1081" y2="308.5" stroke="#dc143c" stroke-width="1.05" stroke-dasharray="9 6 3 6"/>
<line x1="762" y1="334.5" x2="1081" y2="334.5" stroke="#dc143c" stroke-width="1.05" stroke-dasharray="9 6 3 6"/>
<line x1="762" y1="360.5" x2="1081" y2="360.5" stroke="#dc143c" stroke-width="1.05" stroke-dasharray="9 6 3 6"/>
<line x1="762" y1="392.5" x2="1081" y2="392.5" stroke="#dc143c" stroke-width="1.05" stroke-dasharray="9 6 3 6"/>
<line x1="762" y1="418.5" x2="1081" y2="418.5" stroke="#dc143c" stroke-width="1.05" stroke-dasharray="9 6 3 6"/>
<line x1="762" y1="445.5" x2="1081" y2="445.5" stroke="#dc143c" stroke-width="1.05" stroke-dasharray="9 6 3 6"/>
<line x1="678" y1="169.5" x2="1232" y2="169.5" stroke="#32cd32" stroke-width="1.1" stroke-dasharray="9 6 3 6"/>
<line x1="678" y1="174.55" x2="1232" y2="174.55" stroke="#7d8794" stroke-width="1.2"/>
<line x1="762.200" y1="445" x2="794.800" y2="226.700" stroke="#ff0000" stroke-width="1" stroke-dasharray="2.200 2.600"/>
<text x="1080.7" y="138.29" font-size="9.9" fill="#dc143c" text-anchor="end" textLength="76.5" lengthAdjust="spacingAndGlyphs" stroke="none">138.2-(0.89981) 11</text>
<text x="1080.7" y="222.29" font-size="9.9" fill="#dc143c" text-anchor="end" textLength="93" lengthAdjust="spacingAndGlyphs" stroke="none">0.0/100.0 (0.89590) 20</text>
<text x="1080.7" y="248.29" font-size="9.9" fill="#dc143c" text-anchor="end" textLength="93" lengthAdjust="spacingAndGlyphs" stroke="none">11.8/88.2 (0.89469) 19</text>
<text x="1080.7" y="274.29" font-size="9.9" fill="#dc143c" text-anchor="end" textLength="93" lengthAdjust="spacingAndGlyphs" stroke="none">23.6/76.4 (0.89348) 18</text>
<text x="1080.7" y="306.29" font-size="9.9" fill="#dc143c" text-anchor="end" textLength="93" lengthAdjust="spacingAndGlyphs" stroke="none">38.2/61.8 (0.89199) 17</text>
<text x="1080.7" y="332.29" font-size="9.9" fill="#dc143c" text-anchor="end" textLength="93" lengthAdjust="spacingAndGlyphs" stroke="none">50.0/50.0 (0.89078) 16</text>
<text x="1080.7" y="358.29" font-size="9.9" fill="#dc143c" text-anchor="end" textLength="93" lengthAdjust="spacingAndGlyphs" stroke="none">61.8/38.2 (0.88957) 15</text>
<text x="1080.7" y="390.29" font-size="9.9" fill="#dc143c" text-anchor="end" textLength="93" lengthAdjust="spacingAndGlyphs" stroke="none">76.4/23.6 (0.88808) 14</text>
<text x="1080.7" y="416.29" font-size="9.9" fill="#dc143c" text-anchor="end" textLength="93" lengthAdjust="spacingAndGlyphs" stroke="none">88.2/11.8 (0.88687) 13</text>
<text x="1080.7" y="443.29" font-size="9.9" fill="#dc143c" text-anchor="end" textLength="93" lengthAdjust="spacingAndGlyphs" stroke="none">100.0/0.0 (0.88566) 12</text>
<clipPath id="cl0"><rect x="678" y="112" width="554" height="343"/></clipPath><g clip-path="url(#cl0)">
<path d="M678.5 293.31V301.14M682.5 270.79V305.05M686.5 255.13V286.46M690.5 229.68V292.33M694.5 267.86V283.52M698.5 272.75V287.44M702.5 281.17V310.93M706.5 276.08V314.84M710.5 268.84V312.89M714.5 305.05V337.94M718.5 320.72V340.29M722.5 325.61V336.38M726.5 327.57V335.4M725 331.78H728M730.5 320.21V361.32M734.5 336.85V365.24M738.5 348.01V433.37M742.5 411.83V427.3M746.5 416.14V424.95M750.5 404.98V421.03M754.5 397.54V419.08M758.5 400.48V426.91M762.5 405.37V445.51M766.5 402.44V432.78M770.5 401.46V411.25M774.5 390.69V406.35M778.5 371.11V408.31M782.5 355.06V399.5M786.5 356.43V382.47M790.5 367.2V379.92M794.5 366.81V381.29M798.5 360.34V370.13M802.5 356.43V379.33M806.5 273.23V372.68M810.5 260.03V297.22M814.5 266.88V283.52M818.5 271.77V285.48M822.5 268.84V285.48M826.5 243V285.09M830.5 242.02V260.03M834.5 242.02V268.84M838.5 253.18V269.82M842.5 236.14V271.77M846.5 229.68V239.47M850.5 223.81V270.79M854.5 247.3V275.69M858.5 256.11V289M862.5 275.69V287.44M866.5 274.71V289M870.5 272.75V287.44M874.5 253.18V282.54M878.5 257.09V276.67M882.5 266.88V306.03M886.5 284.5V293.31M890.5 284.5V302.71M894.5 282.54V296.83M898.5 281.56V314.84M902.5 270.79V293.7M906.5 271.77V334.42M910.5 280V341.27M914.5 326.98V342.64M918.5 332.46V343.23M917 337.85H920M922.5 320.72V346.56M926.5 288.41V338.73M930.5 278.04V316.8M934.5 281.17V307.01M938.5 281.17V314.84M942.5 280V294.87M946.5 286.46V325.61M950.5 282.15V308.58M954.5 284.11V306.03M958.5 294.87V314.84M962.5 289.98V311.32M966.5 289.39V299.57M970.5 283.13V355.96M974.5 321.3V344.21M978.5 297.22V327.57M982.5 295.66V315.82M986.5 308.97V315.82M990.5 306.03V319.74M989 311.22H992M994.5 289.98V326.59M998.5 271.77V321.7M997 296.34H1000M1002.5 221.8V309.9M1006.5 224.74V237.46M1010.5 223.76V251.56M1014.5 213.97V229.63M1018.5 188.52V229.63M1022.5 162.09V192.44M1026.5 166.59V187.54M1030.5 159.15V194M1034.5 172.86V194.39M1038.5 175.79V188.52M1042.5 168.94V194.39M1046.5 178.73V199.29M1050.5 164.64V203.2M1054.5 169.92V213.97M1058.5 172.86V214.36M1062.5 185.58V193.41M1061 189.5H1064M1066.5 178.14V201.83M1070.5 169.92V200.66M1074.5 129.2V176.77M1078.5 163.07V195.37M1082.5 171.88V191.46M1081 179.22H1084M1086.5 178.34V198.31M1090.5 159.15V191.46M1094.5 164.05V183.63M1098.5 166.99V184.6M1102.5 169.92V201.25M1106.5 172.86V191.46M1110.5 171.29V180.69M1109 176.77H1112M1114.5 172.86V177.75M1113 175.79H1116" stroke="#00ff00" stroke-width="1.050" fill="none"/>
<g fill="#000" stroke="#00ff00" stroke-width="0.900"><rect x="677.4" y="293.31" width="2.2" height="3.92"/><rect x="681.4" y="287.44" width="2.2" height="6.85"/><rect x="685.4" y="256.11" width="2.2" height="30.34"/><rect x="693.4" y="276.67" width="2.2" height="3.92"/><rect x="705.4" y="285.48" width="2.2" height="17.62"/><rect x="721.4" y="331.48" width="2.2" height="3.92"/><rect x="733.4" y="356.43" width="2.2" height="2.94"/><rect x="749.4" y="407.33" width="2.2" height="12.33"/><rect x="757.4" y="414.18" width="2.2" height="2.94"/><rect x="765.4" y="408.31" width="2.2" height="23.1"/><rect x="769.4" y="404.39" width="2.2" height="2.94"/><rect x="773.4" y="393.63" width="2.2" height="11.16"/><rect x="777.4" y="372.68" width="2.2" height="20.36"/><rect x="781.4" y="363.67" width="2.2" height="8.42"/><rect x="793.4" y="370.13" width="2.2" height="8.22"/><rect x="797.4" y="363.67" width="2.2" height="4.5"/><rect x="805.4" y="273.23" width="2.2" height="92.99"/><rect x="809.4" y="266.88" width="2.2" height="6.46"/><rect x="817.4" y="275.69" width="2.2" height="7.83"/><rect x="825.4" y="244.37" width="2.2" height="39.55"/><rect x="829.4" y="242.41" width="2.2" height="1.96"/><rect x="841.4" y="237.51" width="2.2" height="22.12"/><rect x="845.4" y="233.6" width="2.2" height="3.92"/><rect x="853.4" y="261.01" width="2.2" height="7.24"/><rect x="861.4" y="277.65" width="2.2" height="4.89"/><rect x="869.4" y="275.69" width="2.2" height="7.83"/><rect x="877.4" y="270.79" width="2.2" height="4.89"/><rect x="897.4" y="286.46" width="2.2" height="6.46"/><rect x="901.4" y="273.14" width="2.2" height="13.31"/><rect x="921.4" y="334.03" width="2.2" height="3.92"/><rect x="925.4" y="313.28" width="2.2" height="20.75"/><rect x="929.4" y="289.39" width="2.2" height="23.88"/><rect x="937.4" y="282.54" width="2.2" height="31.91"/><rect x="949.4" y="290.37" width="2.2" height="17.03"/><rect x="961.4" y="291.74" width="2.2" height="6.46"/><rect x="973.4" y="321.7" width="2.2" height="19.58"/><rect x="977.4" y="300.16" width="2.2" height="21.14"/><rect x="985.4" y="310.93" width="2.2" height="2.55"/><rect x="993.4" y="297.62" width="2.2" height="12.92"/><rect x="1001.4" y="228.65" width="2.2" height="67.54"/><rect x="1009.4" y="227.28" width="2.2" height="23.88"/><rect x="1013.4" y="215.93" width="2.2" height="11.35"/><rect x="1017.4" y="190.48" width="2.2" height="25.45"/><rect x="1021.4" y="170.51" width="2.2" height="19.58"/><rect x="1033.4" y="176.77" width="2.2" height="16.05"/><rect x="1049.4" y="187.54" width="2.2" height="4.5"/><rect x="1057.4" y="188.52" width="2.2" height="25.45"/><rect x="1069.4" y="171.88" width="2.2" height="27.41"/><rect x="1073.4" y="166.01" width="2.2" height="4.89"/><rect x="1089.4" y="171.29" width="2.2" height="19.58"/><rect x="1097.4" y="176.38" width="2.2" height="5.87"/><rect x="1105.4" y="176.77" width="2.2" height="14.1"/></g>
<g fill="#fff" stroke="#00ff00" stroke-width="0.900"><rect x="689.4" y="256.11" width="2.2" height="24.47"/><rect x="697.4" y="276.67" width="2.2" height="7.83"/><rect x="701.4" y="283.91" width="2.2" height="19.58"/><rect x="709.4" y="285.09" width="2.2" height="20.36"/><rect x="713.4" y="305.05" width="2.2" height="20.56"/><rect x="717.4" y="325.61" width="2.2" height="14.68"/><rect x="729.4" y="331.57" width="2.2" height="26.82"/><rect x="737.4" y="356.43" width="2.2" height="58.14"/><rect x="741.4" y="413.2" width="2.2" height="7.83"/><rect x="745.4" y="420.45" width="2.2" height="1.57"/><rect x="753.4" y="408.31" width="2.2" height="8.81"/><rect x="761.4" y="414.18" width="2.2" height="17.23"/><rect x="785.4" y="363.67" width="2.2" height="6.46"/><rect x="789.4" y="370.13" width="2.2" height="8.81"/><rect x="801.4" y="363.67" width="2.2" height="2.94"/><rect x="813.4" y="266.88" width="2.2" height="16.64"/><rect x="821.4" y="274.71" width="2.2" height="8.81"/><rect x="833.4" y="242.02" width="2.2" height="18.99"/><rect x="837.4" y="260.42" width="2.2" height="8.42"/><rect x="849.4" y="233.6" width="2.2" height="35.24"/><rect x="857.4" y="261.01" width="2.2" height="21.53"/><rect x="865.4" y="276.67" width="2.2" height="6.85"/><rect x="873.4" y="273.73" width="2.2" height="2.35"/><rect x="881.4" y="270.21" width="2.2" height="15.27"/><rect x="885.4" y="285.09" width="2.2" height="5.87"/><rect x="889.4" y="291.35" width="2.2" height="1.96"/><rect x="893.4" y="292.33" width="2.2" height="1.37"/><rect x="905.4" y="273.14" width="2.2" height="31.52"/><rect x="909.4" y="304.08" width="2.2" height="30.34"/><rect x="913.4" y="334.03" width="2.2" height="4.7"/><rect x="933.4" y="289.39" width="2.2" height="16.05"/><rect x="941.4" y="282.54" width="2.2" height="7.83"/><rect x="945.4" y="290.37" width="2.2" height="17.03"/><rect x="953.4" y="291.35" width="2.2" height="7.83"/><rect x="957.4" y="299.18" width="2.2" height="12.14"/><rect x="965.4" y="291.35" width="2.2" height="5.87"/><rect x="969.4" y="297.22" width="2.2" height="44.64"/><rect x="981.4" y="300.16" width="2.2" height="13.7"/><rect x="1005.4" y="228.07" width="2.2" height="5.09"/><rect x="1025.4" y="170.51" width="2.2" height="4.7"/><rect x="1029.4" y="173.84" width="2.2" height="19.58"/><rect x="1037.4" y="177.75" width="2.2" height="1.96"/><rect x="1041.4" y="179.71" width="2.2" height="6.85"/><rect x="1045.4" y="186.56" width="2.2" height="6.26"/><rect x="1053.4" y="186.56" width="2.2" height="27.02"/><rect x="1065.4" y="188.91" width="2.2" height="11.35"/><rect x="1077.4" y="165.42" width="2.2" height="8.42"/><rect x="1085.4" y="178.73" width="2.2" height="11.75"/><rect x="1093.4" y="169.92" width="2.2" height="12.33"/><rect x="1101.4" y="175.79" width="2.2" height="24.86"/></g>
</g>
<polygon points="1021.64,172 1115.56,201.67 1113.36,208.63 1137.2,206.2 1119.08,190.51 1116.88,197.47 1022.96,167.8" fill="#555" transform="translate(4,5)" filter="url(#bl2)"/><polygon points="1021.64,172 1115.56,201.67 1113.36,208.63 1137.2,206.2 1119.08,190.51 1116.88,197.47 1022.96,167.8" fill="#ff0000"/>
<polygon points="1148.9,202.8 1186.37,138.14 1192.69,141.8 1195.5,118 1176.25,132.27 1182.57,135.93 1145.1,200.6" fill="#555" transform="translate(4,5)" filter="url(#bl2)"/><polygon points="1148.9,202.8 1186.37,138.14 1192.69,141.8 1195.5,118 1176.25,132.27 1182.57,135.93 1145.1,200.6" fill="#ff0000"/>
<polygon points="1129.85,493.24 1170.53,461.78 1174.99,467.55 1185,447.8 1163.37,452.52 1167.83,458.3 1127.15,489.76" fill="#555" transform="translate(4,5)" filter="url(#bl2)"/><polygon points="1129.85,493.24 1170.53,461.78 1174.99,467.55 1185,447.8 1163.37,452.52 1167.83,458.3 1127.15,489.76" fill="#ff0000"/>
<polygon points="681.300,118 688.300,118 684.800,122.200" fill="#000000"/>
<text x="693.5" y="123.14" font-size="9.9" fill="#000000" text-anchor="start" textLength="54" lengthAdjust="spacingAndGlyphs" stroke="#000000" stroke-width="0.12">USDCHF,H4</text>
<text x="754" y="123.14" font-size="9.9" fill="#000000" text-anchor="start" textLength="32.8" lengthAdjust="spacingAndGlyphs" stroke="#000000" stroke-width="0.12">0.89816</text>
<text x="790" y="123.14" font-size="9.9" fill="#000000" text-anchor="start" textLength="32.8" lengthAdjust="spacingAndGlyphs" stroke="#000000" stroke-width="0.12">0.89831</text>
<text x="826" y="123.14" font-size="9.9" fill="#000000" text-anchor="start" textLength="32.8" lengthAdjust="spacingAndGlyphs" stroke="#000000" stroke-width="0.12">0.89815</text>
<text x="862" y="123.14" font-size="9.9" fill="#000000" text-anchor="start" textLength="32.8" lengthAdjust="spacingAndGlyphs" stroke="#000000" stroke-width="0.12">0.89824</text>
<text x="684.3" y="167.49" font-size="9.9" fill="#000000" text-anchor="start" textLength="81" lengthAdjust="spacingAndGlyphs" stroke="#000000" stroke-width="0.12">#2445126 buy 0.01</text>
<text x="683" y="470.24" font-size="9.9" fill="#000000" text-anchor="start" textLength="39" lengthAdjust="spacingAndGlyphs" stroke="#000000" stroke-width="0.12">AO_Zotik</text>
<text x="725.2" y="470.24" font-size="9.9" fill="#000000" text-anchor="start" textLength="37.3" lengthAdjust="spacingAndGlyphs" stroke="#000000" stroke-width="0.12">0.001372</text>
<text x="682.4" y="576.19" font-size="9.9" fill="#000000" text-anchor="start" textLength="160" lengthAdjust="spacingAndGlyphs" stroke="#000000" stroke-width="0.12">WPR_VSmark(21|55|77|277) -30.1111</text>
<line x1="1232.5" y1="121.5" x2="1234.8" y2="121.5" stroke="#000000" stroke-width="1"/>
<text x="1237.8" y="124.09" font-size="9.9" fill="#000000" text-anchor="start" textLength="32.8" lengthAdjust="spacingAndGlyphs" stroke="#000000" stroke-width="0.12">0.90070</text>
<line x1="1232.5" y1="154.5" x2="1234.8" y2="154.5" stroke="#000000" stroke-width="1"/>
<text x="1237.8" y="157.14" font-size="9.9" fill="#000000" text-anchor="start" textLength="32.8" lengthAdjust="spacingAndGlyphs" stroke="#000000" stroke-width="0.12">0.89915</text>
<line x1="1232.5" y1="188.5" x2="1234.8" y2="188.5" stroke="#000000" stroke-width="1"/>
<text x="1237.8" y="191.09" font-size="9.9" fill="#000000" text-anchor="start" textLength="32.8" lengthAdjust="spacingAndGlyphs" stroke="#000000" stroke-width="0.12">0.89760</text>
<line x1="1232.5" y1="221.5" x2="1234.8" y2="221.5" stroke="#000000" stroke-width="1"/>
<text x="1237.8" y="224.19" font-size="9.9" fill="#000000" text-anchor="start" textLength="32.8" lengthAdjust="spacingAndGlyphs" stroke="#000000" stroke-width="0.12">0.89605</text>
<line x1="1232.5" y1="254.5" x2="1234.8" y2="254.5" stroke="#000000" stroke-width="1"/>
<text x="1237.8" y="257.29" font-size="9.9" fill="#000000" text-anchor="start" textLength="32.8" lengthAdjust="spacingAndGlyphs" stroke="#000000" stroke-width="0.12">0.89450</text>
<line x1="1232.5" y1="287.5" x2="1234.8" y2="287.5" stroke="#000000" stroke-width="1"/>
<text x="1237.8" y="290.49" font-size="9.9" fill="#000000" text-anchor="start" textLength="32.8" lengthAdjust="spacingAndGlyphs" stroke="#000000" stroke-width="0.12">0.89300</text>
<line x1="1232.5" y1="320.5" x2="1234.8" y2="320.5" stroke="#000000" stroke-width="1"/>
<text x="1237.8" y="323.49" font-size="9.9" fill="#000000" text-anchor="start" textLength="32.8" lengthAdjust="spacingAndGlyphs" stroke="#000000" stroke-width="0.12">0.89145</text>
<line x1="1232.5" y1="353.5" x2="1234.8" y2="353.5" stroke="#000000" stroke-width="1"/>
<text x="1237.8" y="356.39" font-size="9.9" fill="#000000" text-anchor="start" textLength="32.8" lengthAdjust="spacingAndGlyphs" stroke="#000000" stroke-width="0.12">0.88990</text>
<line x1="1232.5" y1="386.5" x2="1234.8" y2="386.5" stroke="#000000" stroke-width="1"/>
<text x="1237.8" y="389.54" font-size="9.9" fill="#000000" text-anchor="start" textLength="32.8" lengthAdjust="spacingAndGlyphs" stroke="#000000" stroke-width="0.12">0.88840</text>
<line x1="1232.5" y1="419.5" x2="1234.8" y2="419.5" stroke="#000000" stroke-width="1"/>
<text x="1237.8" y="422.34" font-size="9.9" fill="#000000" text-anchor="start" textLength="32.8" lengthAdjust="spacingAndGlyphs" stroke="#000000" stroke-width="0.12">0.88685</text>
<line x1="1232.5" y1="452.5" x2="1234.8" y2="452.5" stroke="#000000" stroke-width="1"/>
<text x="1237.8" y="455.29" font-size="9.9" fill="#000000" text-anchor="start" textLength="32.8" lengthAdjust="spacingAndGlyphs" stroke="#000000" stroke-width="0.12">0.88530</text>
<rect x="1234.100" y="168.400" width="37.700" height="10.400" fill="#000"/>
<text x="1237.9" y="177.29" font-size="9.9" fill="#fff" text-anchor="start" textLength="33" lengthAdjust="spacingAndGlyphs" stroke="#fff" stroke-width="0.12">0.89824</text>
<clipPath id="clR"><rect x="674.500" y="108.200" width="598.200" height="621"/></clipPath>
<text x="1236" y="468.09" font-size="9.9" fill="#000000" text-anchor="start" textLength="40.5" lengthAdjust="spacingAndGlyphs" clip-path="url(#clR)" stroke="#000000" stroke-width="0.12">0.005525</text>
<line x1="1232.5" y1="508.4" x2="1235.5" y2="508.4" stroke="#000000" stroke-width="1"/>
<text x="1236" y="511.29" font-size="9.9" fill="#000000" text-anchor="start" textLength="17.7" lengthAdjust="spacingAndGlyphs" stroke="#000000" stroke-width="0.12">0.00</text>
<text x="1236" y="558.19" font-size="9.9" fill="#000000" text-anchor="start" textLength="35.4" lengthAdjust="spacingAndGlyphs" stroke="#000000" stroke-width="0.12">-0.00588</text>
<text x="1236.3" y="574.19" font-size="9.9" fill="#000000" text-anchor="start" textLength="4.6" lengthAdjust="spacingAndGlyphs" stroke="#000000" stroke-width="0.12">0</text>
<text x="1235.7" y="596.39" font-size="9.9" fill="#000000" text-anchor="start" textLength="12" lengthAdjust="spacingAndGlyphs" stroke="#000000" stroke-width="0.12">-20</text>
<line x1="1232.5" y1="592.7" x2="1235.5" y2="592.7" stroke="#000000" stroke-width="1"/>
<text x="1235.7" y="640.39" font-size="9.9" fill="#000000" text-anchor="start" textLength="12" lengthAdjust="spacingAndGlyphs" stroke="#000000" stroke-width="0.12">-50</text>
<line x1="1232.5" y1="636.7" x2="1235.5" y2="636.7" stroke="#000000" stroke-width="1"/>
<text x="1235.7" y="683.49" font-size="9.9" fill="#000000" text-anchor="start" textLength="12" lengthAdjust="spacingAndGlyphs" stroke="#000000" stroke-width="0.12">-80</text>
<line x1="1232.5" y1="679.8" x2="1235.5" y2="679.8" stroke="#000000" stroke-width="1"/>
<text x="1235.7" y="707.39" font-size="9.9" fill="#000000" text-anchor="start" textLength="18" lengthAdjust="spacingAndGlyphs" stroke="#000000" stroke-width="0.12">-100</text>
<line x1="678" y1="508.4" x2="1232" y2="508.4" stroke="#c0c0c0" stroke-width="1" stroke-dasharray="3 3"/>
<clipPath id="cl2"><rect x="678" y="459" width="554" height="102"/></clipPath><g clip-path="url(#cl2)">
<polyline fill="none" stroke="#000000" stroke-width="0.9" stroke-linejoin="round" stroke-linecap="round" points="677.35,507.79 684.79,506.42 694.58,505.84 700.45,506.42 710.24,508.77 721.99,510.34 733.73,511.12 743.52,513.08 753.31,514.26 762.12,515.23 772.89,514.26 782.67,512.3 792.46,510.34 802.25,508.77 812.04,504.86 821.83,501.92 831.62,497.42 841.41,494.68 847.28,493.5 855.11,493.11 866.86,493.5 874.69,495.46 882.52,497.42 890.35,499.96 898.18,502.51 906.01,505.25 912.86,508.38 915,509.17 922.83,512.3 934.58,514.65 946.32,515.04 960.03,514.26 973.73,513.08 983.52,510.73 993.31,509.17 1003.1,507.79 1012.89,504.86 1020.72,502.51 1028.55,499.96 1036.38,498.99 1044.21,498.2 1052.04,499.96 1061.83,500.94 1071.62,501.33 1081.41,501.92 1091.19,503.29 1100.98,505.25 1112.73,508.38"/>
<polyline fill="none" stroke="#008000" stroke-width="2.3" stroke-linejoin="round" stroke-linecap="round" points="677.35,521.5 684.79,519.54 694.58,518.56 704.37,519.15 714.15,520.13 723.94,522.09 733.73,523.46 743.52,528.35 753.31,530.31 761.14,531.87 772.89,531.87 782.67,530.31 792.46,528.74 802.25,526.39 812.04,520.52 821.83,515.63 831.62,510.73 841.41,506.82 847.28,504.86 855.11,503.88 862.94,503.88 870.77,503.29 878.6,502.9 886.43,503.88 894.26,503.88 902.09,503.88 909.93,505.84 915,508.38 924.79,508.77 944.37,508.77 963.94,508.38 983.52,509.17 999.18,508.77 1007.01,505.84 1016.8,500.94 1026.59,497.03 1036.38,494.68 1044.21,493.11 1059.87,492.13 1071.62,491.55 1077.49,490.76 1085.32,491.55 1097.07,492.13 1106.86,492.72 1114.3,493.11"/>
<polyline fill="none" stroke="#ff0000" stroke-width="1.9" stroke-linejoin="round" stroke-linecap="round" points="677.35,524.04 680.87,522.48 684.79,517.58 689.68,511.71 694.58,509.75 698.49,511.71 704.37,516.6 710.24,519.54 716.11,524.44 721.99,530.7 729.82,530.7 733.73,532.27 737.65,536.18 741.56,544.01 746.46,554.78 750.37,555.76 755.27,550.86 759.18,548.91 765.05,548.91 769.95,545.97 774.84,540.1 780.72,532.27 785.61,526.39 790.51,520.13 796.38,518.56 803.23,515.63 806.17,508.77 810.08,497.03 814,485.28 817.91,479.41 823.79,477.45 829.66,473.53 835.53,470.01 841.41,471.19 847.28,469.23 853.15,469.62 857.07,473.53 860.98,479.41 865.88,484.3 868.81,486.26 872.73,486.85 877.62,485.67 882.52,488.22 886.43,493.11 890.35,498.01 896.22,500.94 902.09,503.29 906.99,506.82 911.88,514.65 915,518.56 918.92,523.46 922.83,526 926.75,524.04 930.66,518.56 934.58,514.26 940.45,513.08 950.24,513.08 960.03,513.67 969.82,514.26 973.73,516.6 977.65,518.95 982.54,515.63 987.44,512.69 993.31,511.71 999.18,510.34 1002.12,504.86 1006.03,495.07 1009.95,486.26 1013.86,479.41 1017.78,478.43 1021.7,472.56 1026.59,465.7 1030.51,463.75 1034.42,465.31 1040.29,468.64 1046.17,471.58 1052.04,476.47 1057.91,480.39 1063.79,482.34 1069.66,482.93 1075.53,480.39 1081.41,479.8 1084.34,483.32 1087.28,487.24 1091.19,488.22 1098.05,488.22 1101.96,491.15 1105.88,494.68 1109.79,496.05 1114.3,496.05"/>
</g>
<line x1="678" y1="593.3" x2="1232" y2="593.3" stroke="#000000" stroke-width="1.1" stroke-dasharray="10.600 4.500" stroke-dashoffset="1"/>
<line x1="678" y1="637.4" x2="1232" y2="637.4" stroke="#000000" stroke-width="1.1" stroke-dasharray="10.600 4.500" stroke-dashoffset="1"/>
<line x1="678" y1="680.4" x2="1232" y2="680.4" stroke="#000000" stroke-width="1.1" stroke-dasharray="10.600 4.500" stroke-dashoffset="1"/>
<clipPath id="cl3"><rect x="678" y="564" width="554" height="146"/></clipPath><g clip-path="url(#cl3)">
<polyline fill="none" stroke="#ff0000" stroke-width="0.9" stroke-linejoin="round" stroke-linecap="round" stroke-linejoin="miter" points="677.35,665.76 681.85,656.95 686.35,620.73 690.27,648.14 694.58,644.22 698.49,643.83 702.41,668.7 706.32,643.25 710.24,667.72 714.15,691.21 719.05,707.85 721.99,698.06 725.9,698.06 730.79,707.85 734.71,701 738.63,696.1 743.52,701.98 747.44,699.04 750.37,691.21 755.27,699.04 758.2,696.69 762.12,700.02 765.05,687.29 768.97,681.42 772.89,673.59 777.78,651.08 782.67,642.27 789.53,654.99 793.44,636.39 798.34,614.86 802.25,618.77 804.21,597.24 806.56,564.35 810.08,573.75 814.39,583.53 817.52,575.7 821.44,583.53 825.74,565.92 830.64,565.92 834.55,577.66 838.47,583.53 842.38,565.92 846.3,566.89 849.24,591.37 852.17,598.22 855.11,594.3 858.05,605.07 862.94,610.94 865.88,618.77 869.79,611.92 874.69,611.92 878.6,608.99 882.52,620.73 886.43,629.54 890.35,688.27 895.24,686.31 902.09,643.25 906.99,671.63 909.93,697.08 914.82,704.91 915,703.93 918.92,700.02 922.83,691.21 926.75,663.8 930.66,641.29 934.58,649.12 938.49,612.51 942.41,624.65 946.32,649.12 950.24,624.26 954.15,637.37 958.46,652.45 961.99,608.99 966.29,613.88 970.4,685.34 974.71,640.31 978.63,617.79 982.54,636.39 986.46,632.48 990.37,620.73 994.29,599.2 998.2,605.46 1001.14,577.66 1006.03,581.58 1010.93,573.75 1015.82,565.52 1020.72,566.89 1026.59,570.81 1030.11,588.43 1034.42,578.64 1040.29,581.58 1046.17,587.45 1050.47,581.58 1054.39,607.42 1058.89,590.39 1062.81,592.34 1066.14,599.2 1070.64,573.75 1074.55,588.43 1078.47,596.26 1082.38,604.09 1086.3,638.35 1090.22,614.86 1094.13,641.29 1098.05,632.48 1102.55,688.27 1106.46,645.79 1110.38,645.2 1114.3,641.87"/>
<polyline fill="none" stroke="#1e90ff" stroke-width="0.9" stroke-linejoin="round" stroke-linecap="round" points="677.35,684.94 681.85,677.51 686.35,658.91 690.27,675.55 694.58,672.61 698.49,677.51 702.41,691.21 706.32,678.48 710.24,687.29 714.15,699.04 718.46,708.44 721.99,702.96 725.9,702.17 730.79,707.26 734.71,702.96 738.63,699.04 743.52,702.96 747.44,700.61 750.37,696.3 755.27,701 758.2,699.04 762.12,702.17 765.05,693.17 768.97,689.25 772.89,681.42 777.78,670.65 782.28,662.82 789.53,671.63 794.42,665.76 798.34,663.41 802.25,663.8 804.21,640.31 806.17,609.96 810.08,608.01 814.39,611.92 817.91,608.01 821.83,609.96 824.77,588.43 829.66,586.47 834.55,588.43 838.47,592.34 841.41,571.79 846.3,568.85 849.24,590.39 852.17,593.32 855.11,589.41 858.05,602.13 861.96,601.15 865.88,604.09 870.77,599.2 874.69,597.24 878.6,595.28 882.52,606.05 890.35,609.96 896.22,607.03 902.49,596.26 906.01,616.82 909.93,634.44 914.82,639.92 915,640.31 918.92,638.35 922.83,635.41 926.75,620.73 930.66,609.96 934.58,618.77 938.49,611.92 942.41,615.84 946.32,621.71 950.24,611.92 954.15,617.79 958.46,626.6 961.99,611.92 966.29,615.84 970.4,640.31 974.71,628.56 978.63,618.77 982.54,624.65 986.46,632.48 990.37,632.09 994.29,622.69 998.79,624.65 1001.14,575.7 1006.03,578.64 1010.93,571.79 1015.82,565.92 1020.72,566.89 1026.59,572.77 1030.11,589.41 1034.42,578.64 1040.29,583.53 1046.17,588.43 1050.47,583.53 1054.39,604.09 1058.89,586.47 1062.81,587.45 1066.14,593.32 1070.64,574.73 1074.55,587.45 1078.47,592.34 1082.38,598.22 1086.3,604.09 1090.22,593.32 1094.13,598.22 1098.05,594.3 1102.55,610.94 1106.46,596.26 1110.38,595.67 1114.3,594.3"/>
<polyline fill="none" stroke="#9400d3" stroke-width="0.9" stroke-linejoin="round" stroke-linecap="round" points="677.35,684.94 681.85,677.51 686.35,658.91 690.27,675.55 694.58,672.61 698.49,677.51 702.41,691.21 706.32,678.48 710.24,687.29 714.15,699.04 718.46,708.83 721.99,703.93 725.9,702.96 730.79,707.85 734.71,703.93 738.63,700.02 743.52,703.93 747.44,701.39 750.37,697.08 755.27,701.98 758.2,700.02 762.12,703.35 765.05,695.12 768.97,692.19 772.89,689.25 777.78,679.07 782.67,673.98 790.51,681.03 794.42,676.53 798.34,672.61 802.25,673.98 804.21,650.1 806.17,637.37 810.08,629.54 814.39,636.39 817.91,631.5 821.83,636.39 825.74,620.73 829.66,614.47 834.55,621.71 838.47,626.6 842.38,611.92 846.3,608.01 850.22,624.65 855.11,619.75 860.98,614.86 866.86,612.9 872.73,611.92 878.6,610.55 882.52,617.79 890.35,623.67 897.2,619.75 902.49,608.99 906.01,624.65 909.93,640.31 914.82,645.2 915,645.79 918.92,645.2 922.83,636.39 926.75,618.77 930.66,607.42 934.58,617.21 938.49,603.5 942.41,608.99 946.32,618.77 950.24,608.59 954.15,614.47 958.46,621.71 961.99,608.01 966.29,612.9 970.4,641.29 974.71,626.6 978.63,615.25 982.54,622.69 986.46,621.71 990.37,620.73 994.29,612.9 998.79,611.92 1001.14,571.4 1006.03,574.73 1010.93,569.83 1015.82,564.94 1020.72,566.31 1026.59,569.83 1030.11,581.58 1034.42,573.75 1040.29,577.66 1046.17,582.56 1050.47,578.64 1054.39,593.32 1058.89,579.62 1062.81,580.6 1066.14,585.49 1070.64,571.4 1074.55,581.58 1078.47,587.45 1082.38,592.34 1086.3,599.2 1090.22,588.43 1094.13,593.32 1098.05,591.37 1102.55,607.42 1106.46,592.34 1110.38,593.32 1114.3,594.3"/>
<polyline fill="none" stroke="#000000" stroke-width="2.2" stroke-linejoin="round" stroke-linecap="round" points="677.35,611.92 681.85,611.92 685.77,606.05 689.68,608.99 694.58,608.99 698.49,609.96 702.41,613.88 706.32,611.92 711.22,616.82 716.11,620.73 721.99,620.73 725.9,619.75 729.82,624.65 733.73,624.65 738.63,637.37 745.48,637.37 750.37,636 755.27,636.98 759.18,637.37 762.12,639.92 766.03,636 770.93,634.83 775.82,631.5 780.72,627 784.63,627 788.55,628.95 792.46,628.56 797.36,626.6 803.23,626.6 805.78,608.99 810.08,608.01 814,609.96 817.91,608.59 821.83,609.96 824.77,603.11 828.68,602.13 831.62,604.09 835.53,607.03 839.45,606.64 842.38,601.15 846.3,601.15 849.24,607.03 854.13,607.42 858.05,609.96 865.88,609.96 872.73,608.01 878.6,608.01 882.52,609.96 887.41,611.33 896.22,611.33 902.09,608.59 906.99,614.86 910.9,620.73 914.82,620.73 915,620.73 922.83,620.73 926.75,614.86 930.27,611.92 933.6,614.86 938.49,610.94 942.41,613.29 946.32,614.47 950.24,613.29 954.15,622.69 958.46,632.09 965.9,632.09 969.82,646.18 977.65,646.57 982.54,659.49 989.39,659.49 994.29,654.01 998.79,653.03 1002.12,629.54 1007.01,629.54 1010.93,627.58 1014.84,623.67 1018.76,613.88 1022.28,607.42 1026.2,607.42 1030.11,614.86 1034.03,609.96 1038.34,611.92 1044.21,614.47 1050.08,613.88 1054.39,622.69 1058.89,613.88 1062.81,614.86 1066.14,616.82 1070.64,608.01 1074.55,606.05 1078.47,608.59 1083.36,610.94 1086.89,613.88 1090.22,608.01 1094.13,610.94 1098.05,609.96 1101.96,617.79 1105.88,609.96 1108.81,608.99 1114.3,608.99"/>
</g>
<line x1="678.5" y1="710.5" x2="678.5" y2="714" stroke="#000000" stroke-width="1"/>
<text x="677.5" y="723.59" font-size="9.9" fill="#000000" text-anchor="start" textLength="49.9" lengthAdjust="spacingAndGlyphs" stroke="#000000" stroke-width="0.12">26 Jun 2014</text>
<line x1="742.5" y1="710.5" x2="742.5" y2="714" stroke="#000000" stroke-width="1"/>
<text x="741.5" y="723.59" font-size="9.9" fill="#000000" text-anchor="start" textLength="53" lengthAdjust="spacingAndGlyphs" stroke="#000000" stroke-width="0.12">30 Jun 20:00</text>
<line x1="806.5" y1="710.5" x2="806.5" y2="714" stroke="#000000" stroke-width="1"/>
<text x="805.5" y="723.59" font-size="9.9" fill="#000000" text-anchor="start" textLength="44.5" lengthAdjust="spacingAndGlyphs" stroke="#000000" stroke-width="0.12">3 Jul 12:00</text>
<line x1="870.5" y1="710.5" x2="870.5" y2="714" stroke="#000000" stroke-width="1"/>
<text x="869.5" y="723.59" font-size="9.9" fill="#000000" text-anchor="start" textLength="44.5" lengthAdjust="spacingAndGlyphs" stroke="#000000" stroke-width="0.12">8 Jul 04:00</text>
<line x1="934.5" y1="710.5" x2="934.5" y2="714" stroke="#000000" stroke-width="1"/>
<text x="933.5" y="723.59" font-size="9.9" fill="#000000" text-anchor="start" textLength="50.5" lengthAdjust="spacingAndGlyphs" stroke="#000000" stroke-width="0.12">10 Jul 20:00</text>
<line x1="998.5" y1="710.5" x2="998.5" y2="714" stroke="#000000" stroke-width="1"/>
<text x="997.5" y="723.59" font-size="9.9" fill="#000000" text-anchor="start" textLength="50.5" lengthAdjust="spacingAndGlyphs" stroke="#000000" stroke-width="0.12">15 Jul 12:00</text>
<line x1="1062.5" y1="710.5" x2="1062.5" y2="714" stroke="#000000" stroke-width="1"/>
<text x="1061.5" y="723.59" font-size="9.9" fill="#000000" text-anchor="start" textLength="50.5" lengthAdjust="spacingAndGlyphs" stroke="#000000" stroke-width="0.12">18 Jul 04:00</text>
<polygon points="1112.500,112 1123.500,112 1118,117.300" fill="#75849a"/>
</svg>
<div class="a" style="left:4.4px;top:733.600px;width:1276px;height:2.600px;background:#f4f4f4"></div>
<div class="a" style="left:4.4px;top:736px;width:1276px;height:1px;background:#111"></div>
<div class="a" style="left:4.4px;top:737px;width:1276px;height:19px;background:#dcdcdc"></div>
<div class="a" style="left:5px;top:738px;width:1px;height:18px;background:#f4f4f4"></div>
<span class="t" style="left:18.3px;top:737.3px;font-size:11.5px;line-height:16px;letter-spacing:-1.05px;color:#6e7079;">EURUSD,M5</span>
<span class="t" style="left:99px;top:737.3px;font-size:11.5px;line-height:16px;letter-spacing:-0.94px;color:#6e7079;">EURUSD,M15</span>
<span class="t" style="left:185.6px;top:737.3px;font-size:11.5px;line-height:16px;letter-spacing:-1.11px;color:#6e7079;">GBPUSD,M15</span>
<span class="t" style="left:271.6px;top:737.3px;font-size:11.5px;line-height:16px;letter-spacing:-1.14px;color:#6e7079;">GBPUSD,H4</span>
<span class="t" style="left:350.3px;top:737.3px;font-size:11.5px;line-height:16px;letter-spacing:-0.94px;color:#6e7079;">AUDUSD,M15</span>
<span class="t" style="left:438.3px;top:737.3px;font-size:11.5px;line-height:16px;letter-spacing:-0.88px;color:#6e7079;">AUDUSD,H4</span>
<span class="t" style="left:518.9px;top:737.3px;font-size:11.5px;line-height:16px;letter-spacing:-0.89px;color:#6e7079;">NZDUSD,M15</span>
<span class="t" style="left:606.3px;top:737.3px;font-size:11.5px;line-height:16px;letter-spacing:-0.9px;color:#6e7079;">NZDUSD,H1</span>
<span class="t" style="left:687.4px;top:737.3px;font-size:11.5px;line-height:16px;letter-spacing:-0.79px;color:#6e7079;">USDCHF,M15</span>
<span class="t" style="left:854.6px;top:737.3px;font-size:11.5px;line-height:16px;letter-spacing:-0.97px;color:#6e7079;">USDCAD,M15</span>
<span class="t" style="left:942.3px;top:737.3px;font-size:11.5px;line-height:16px;letter-spacing:-0.86px;color:#6e7079;">USDCAD,H4</span>
<span class="t" style="left:1021px;top:737.3px;font-size:11.5px;line-height:16px;letter-spacing:-0.92px;color:#6e7079;">EURGBP,M15</span>
<span class="t" style="left:1107px;top:737.3px;font-size:11.5px;line-height:16px;letter-spacing:-0.89px;color:#6e7079;">EURGBP,H4</span>
<span class="t" style="left:1186.5px;top:737.3px;font-size:11.5px;line-height:16px;letter-spacing:-0.9px;color:#6e7079;">USDJPY,M15</span>
<div class="a" style="left:87.8px;top:739px;width:1px;height:12.600px;background:#606060"></div>
<div class="a" style="left:175.9px;top:739px;width:1px;height:12.600px;background:#606060"></div>
<div class="a" style="left:260.2px;top:739px;width:1px;height:12.600px;background:#606060"></div>
<div class="a" style="left:338.5px;top:739px;width:1px;height:12.600px;background:#606060"></div>
<div class="a" style="left:427.8px;top:739px;width:1px;height:12.600px;background:#606060"></div>
<div class="a" style="left:508.1px;top:739px;width:1px;height:12.600px;background:#606060"></div>
<div class="a" style="left:595.8px;top:739px;width:1px;height:12.600px;background:#606060"></div>
<div class="a" style="left:675.8px;top:739px;width:1px;height:12.600px;background:#606060"></div>
<div class="a" style="left:931.9px;top:739px;width:1px;height:12.600px;background:#606060"></div>
<div class="a" style="left:1011.9px;top:739px;width:1px;height:12.600px;background:#606060"></div>
<div class="a" style="left:1096.4px;top:739px;width:1px;height:12.600px;background:#606060"></div>
<div class="a" style="left:1176.1px;top:739px;width:1px;height:12.600px;background:#606060"></div>
<div class="a" style="left:764px;top:735.500px;width:80.500px;height:19.200px;background:#fff;border:1px solid #000;border-top:none"></div>
<span class="t" style="left:773.8px;top:737.3px;font-size:11.5px;line-height:16px;letter-spacing:-0.62px;color:#000;">USDCHF,H4</span>
<svg width="1280" height="756" viewBox="0 0 1280 756" style="pointer-events:none"><polygon points="1259.200,742.600 1259.200,749 1255.700,745.800" fill="#9a9a9a"/><polygon points="1272.600,742.200 1272.600,749.400 1276.500,745.800" fill="#000"/></svg>
</body></html>
